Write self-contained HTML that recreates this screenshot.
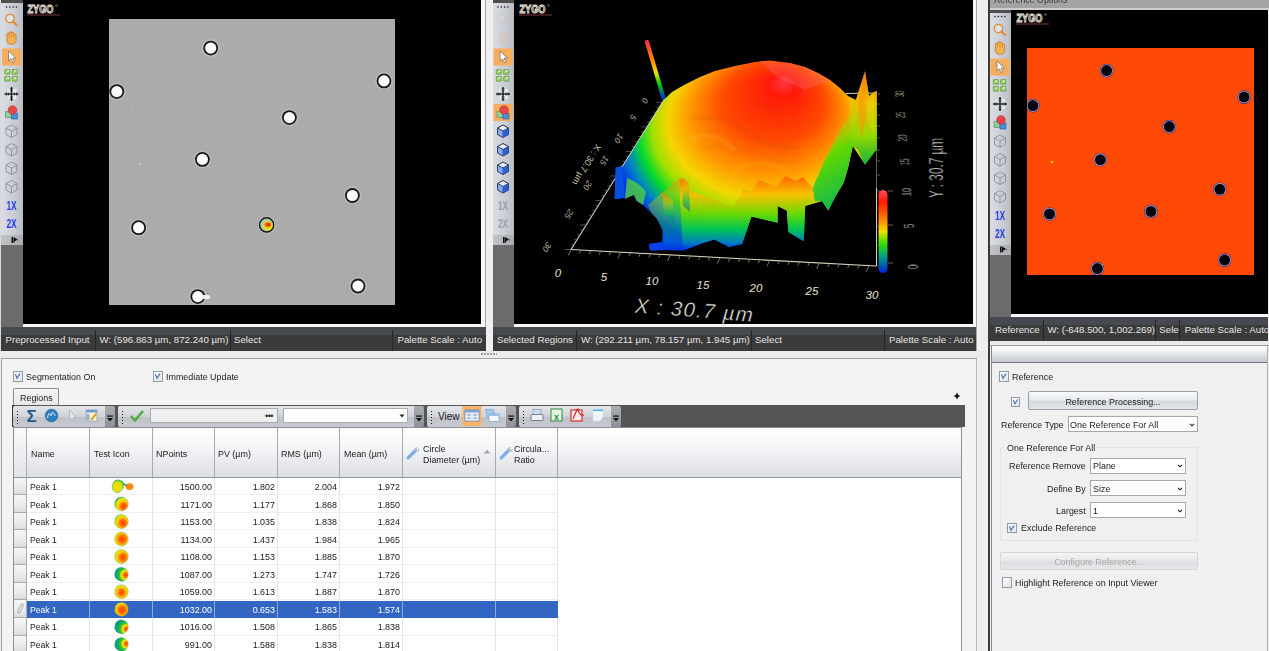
<!DOCTYPE html><html><head><meta charset="utf-8"><style>
html,body{margin:0;padding:0;width:1269px;height:651px;overflow:hidden;background:#efefef;font-family:'Liberation Sans', sans-serif}
div{box-sizing:border-box}
</style></head><body><div style="position:relative;width:1269px;height:651px;overflow:hidden">
<div style="position:absolute;left:0;top:0;width:1px;height:351px;background:#d8d8d8"></div>
<div style="position:absolute;left:22px;top:0;width:459px;height:324px;background:#000"></div>
<div style="position:absolute;left:481px;top:0;width:4px;height:327px;background:#f7f7f7"></div>
<div style="position:absolute;left:22px;top:324px;width:463px;height:3px;background:#f7f7f7"></div>
<div style="position:absolute;left:485px;top:0;width:1px;height:351px;background:#a6a6a6"></div>
<div style="position:absolute;left:1px;top:0px;width:21.5px;height:327px;background:#6b6b6b"></div><div style="position:absolute;left:1px;top:0px;width:21.5px;height:3px;background:#4e4e4e"></div><div style="position:absolute;left:1px;top:3px;width:21.5px;height:232px;background:linear-gradient(90deg,#dadde3,#c9ccd3 60%,#b9bcc3)"></div><div style="position:absolute;left:1px;top:235px;width:21.5px;height:10px;background:linear-gradient(90deg,#c2c4c8,#a9abb0)"></div><svg style="position:absolute;left:0;top:0" width="1269" height="651" viewBox="0 0 1269 651" overflow="visible"><circle cx="6.5" cy="7" r="0.75" fill="#111"/><circle cx="9.8" cy="7" r="0.75" fill="#111"/><circle cx="13.1" cy="7" r="0.75" fill="#111"/><circle cx="16.4" cy="7" r="0.75" fill="#111"/><g opacity="1"><circle cx="10.0" cy="18.5" r="4.2" fill="#dfe3ea" stroke="#e08a2a" stroke-width="1.3"/>
<line x1="13.0" y1="21.5" x2="16.5" y2="25.0" stroke="#e8893a" stroke-width="2.4" stroke-linecap="round"/></g><g opacity="1" transform="translate(11.5 38.5)"><path d="M-4.6 -1 L-4.6 -4.2 Q-4.6 -5.4 -3.5 -5.4 Q-2.4 -5.4 -2.4 -4.2 L-2.4 -5.6 Q-2.4 -6.8 -1.2 -6.8 Q0 -6.8 0 -5.6 L0 -5.2 Q0 -6.4 1.2 -6.4 Q2.4 -6.4 2.4 -5.2 L2.4 -3.6 Q2.4 -4.6 3.5 -4.6 Q4.6 -4.6 4.6 -3.4 L4.6 1.5 Q4.6 5.5 0.5 5.8 L-1 5.8 Q-4.6 5.5 -4.6 2z" fill="#f2b452" stroke="#c7772a" stroke-width="0.8"/><path d="M-2.4 -4 v3 M0 -5 v3.5 M2.4 -3.5 v3" stroke="#c7772a" stroke-width="0.5"/></g><rect x="2" y="48.5" width="19.0" height="17" fill="#f6ae5e"/><path d="M8.5 51.0 l0 10 l2.4 -2.2 l2 4 l1.6 -0.8 l-2 -3.8 l3.4 0 z" fill="#fff" stroke="#777" stroke-width="0.8"/><rect x="4.699999999999999" y="69.5" width="5.2" height="4.8" rx="0.6" fill="#8fc85a" stroke="#4f8a2e" stroke-width="0.5"/><path d="M5.9 72.7 L8.5 70.7 M8.5 70.7 l-1.4 0 M8.5 70.7 l0 1.4" stroke="#f4fff0" stroke-width="0.7" fill="none"/><rect x="4.699999999999999" y="76.5" width="5.2" height="4.8" rx="0.6" fill="#8fc85a" stroke="#4f8a2e" stroke-width="0.5"/><path d="M5.9 79.7 L8.5 77.7 M8.5 77.7 l-1.4 0 M8.5 77.7 l0 1.4" stroke="#f4fff0" stroke-width="0.7" fill="none"/><rect x="12.1" y="69.5" width="5.2" height="4.8" rx="0.6" fill="#8fc85a" stroke="#4f8a2e" stroke-width="0.5"/><path d="M13.299999999999999 72.7 L15.899999999999999 70.7 M15.899999999999999 70.7 l-1.4 0 M15.899999999999999 70.7 l0 1.4" stroke="#f4fff0" stroke-width="0.7" fill="none"/><rect x="12.1" y="76.5" width="5.2" height="4.8" rx="0.6" fill="#8fc85a" stroke="#4f8a2e" stroke-width="0.5"/><path d="M13.299999999999999 79.7 L15.899999999999999 77.7 M15.899999999999999 77.7 l-1.4 0 M15.899999999999999 77.7 l0 1.4" stroke="#f4fff0" stroke-width="0.7" fill="none"/><rect x="7.5" y="89.0" width="9" height="10" fill="#e6e8ec"/><line x1="4.5" y1="94.0" x2="18.5" y2="94.0" stroke="#111" stroke-width="1.3"/>
<line x1="11.5" y1="87.0" x2="11.5" y2="101.0" stroke="#111" stroke-width="1.3"/>
<path d="M6.5 92.5v3M8.5 92.5v3M14.5 92.5v3M16.5 92.5v3M10.0 89.0h3M10.0 91.0h3M10.0 97.0h3M10.0 99.0h3" stroke="#222" stroke-width="0.8"/><rect x="5.5" y="111.5" width="6" height="6" fill="#8fcf9a" stroke="#4a8a6a" stroke-width="0.6"/>
<rect x="11.5" y="113.0" width="6" height="6" fill="#4a8fd8" stroke="#2a5a9a" stroke-width="0.6"/>
<circle cx="12.5" cy="110.0" r="4.3" fill="#e8454a" stroke="#b02a30" stroke-width="0.6"/><path d="M11.5 125.0 l5.5 3 v6.5 l-5.5 3 l-5.5 -3 v-6.5z" fill="none" stroke="#8a8e96" stroke-width="0.9"/>
<path d="M6.0 128.0 l5.5 3 l5.5 -3 M11.5 131.0 v6.5" stroke="#8a8e96" stroke-width="0.9" fill="none"/><path d="M11.5 143.5 l5.5 3 v6.5 l-5.5 3 l-5.5 -3 v-6.5z" fill="none" stroke="#8a8e96" stroke-width="0.9"/>
<path d="M6.0 146.5 l5.5 3 l5.5 -3 M11.5 149.5 v6.5" stroke="#8a8e96" stroke-width="0.9" fill="none"/><path d="M11.5 162.0 l5.5 3 v6.5 l-5.5 3 l-5.5 -3 v-6.5z" fill="none" stroke="#8a8e96" stroke-width="0.9"/>
<path d="M6.0 165.0 l5.5 3 l5.5 -3 M11.5 168.0 v6.5" stroke="#8a8e96" stroke-width="0.9" fill="none"/><path d="M11.5 180.5 l5.5 3 v6.5 l-5.5 3 l-5.5 -3 v-6.5z" fill="none" stroke="#8a8e96" stroke-width="0.9"/>
<path d="M6.0 183.5 l5.5 3 l5.5 -3 M11.5 186.5 v6.5" stroke="#8a8e96" stroke-width="0.9" fill="none"/><text x="6.5" y="209.5" font-family="Liberation Sans" font-weight="bold" font-size="12" fill="#1f3ee6" textLength="10" lengthAdjust="spacingAndGlyphs">1X</text><text x="6.5" y="228.0" font-family="Liberation Sans" font-weight="bold" font-size="12" fill="#1f3ee6" textLength="10" lengthAdjust="spacingAndGlyphs">2X</text><rect x="11.5" y="237.0" width="1.6" height="6" fill="#111"/><path d="M13.5 237.0 l5 3 l-5 3z" fill="#111"/><path d="M14.5 242.0 l3 -2" stroke="#fff" stroke-width="0.8"/></svg>
<svg style="position:absolute;left:0;top:0" width="1269" height="651" viewBox="0 0 1269 651"><rect x="109" y="19" width="286" height="286" fill="#ababab"/><defs><clipPath id="lclip"><rect x="109" y="19" width="286" height="286"/></clipPath></defs><g clip-path="url(#lclip)"><circle cx="210.7" cy="48.1" r="9" fill="#c4c4c4" opacity="0.6"/><circle cx="210.7" cy="48.1" r="7.4" fill="#1a1a1a"/><circle cx="210.7" cy="48.1" r="5.6" fill="#fdfdfd"/><circle cx="116.8" cy="91.6" r="9" fill="#c4c4c4" opacity="0.6"/><circle cx="116.8" cy="91.6" r="7.4" fill="#1a1a1a"/><circle cx="116.8" cy="91.6" r="5.6" fill="#fdfdfd"/><circle cx="384" cy="80.9" r="9" fill="#c4c4c4" opacity="0.6"/><circle cx="384" cy="80.9" r="7.4" fill="#1a1a1a"/><circle cx="384" cy="80.9" r="5.6" fill="#fdfdfd"/><circle cx="289.4" cy="117.6" r="9" fill="#c4c4c4" opacity="0.6"/><circle cx="289.4" cy="117.6" r="7.4" fill="#1a1a1a"/><circle cx="289.4" cy="117.6" r="5.6" fill="#fdfdfd"/><circle cx="202.4" cy="159.4" r="9" fill="#c4c4c4" opacity="0.6"/><circle cx="202.4" cy="159.4" r="7.4" fill="#1a1a1a"/><circle cx="202.4" cy="159.4" r="5.6" fill="#fdfdfd"/><circle cx="352.4" cy="195.5" r="9" fill="#c4c4c4" opacity="0.6"/><circle cx="352.4" cy="195.5" r="7.4" fill="#1a1a1a"/><circle cx="352.4" cy="195.5" r="5.6" fill="#fdfdfd"/><circle cx="138.6" cy="227.7" r="9" fill="#c4c4c4" opacity="0.6"/><circle cx="138.6" cy="227.7" r="7.4" fill="#1a1a1a"/><circle cx="138.6" cy="227.7" r="5.6" fill="#fdfdfd"/><circle cx="358" cy="286" r="9" fill="#c4c4c4" opacity="0.6"/><circle cx="358" cy="286" r="7.4" fill="#1a1a1a"/><circle cx="358" cy="286" r="5.6" fill="#fdfdfd"/><circle cx="197.8" cy="296.6" r="9" fill="#c4c4c4" opacity="0.6"/><circle cx="197.8" cy="296.6" r="7.4" fill="#1a1a1a"/><circle cx="197.8" cy="296.6" r="5.6" fill="#fdfdfd"/><ellipse cx="206" cy="297" rx="4" ry="2.2" fill="#f4f4f4"/><circle cx="266.6" cy="224.9" r="9" fill="#c4c4c4" opacity="0.6"/><circle cx="266.6" cy="224.9" r="7.8" fill="#1a1a1a"/><circle cx="266.6" cy="224.9" r="6.3" fill="#a8d0b8"/><ellipse cx="267.8" cy="225.70000000000002" rx="4.8" ry="5" fill="#e0e020"/><ellipse cx="267.8" cy="224.6" rx="3.4" ry="2.6" fill="#f86a10"/><ellipse cx="268.6" cy="224.4" rx="1.8" ry="1.5" fill="#e83010"/><circle cx="140" cy="164" r="0.8" fill="#eee"/><circle cx="131" cy="110" r="0.6" fill="#ddd"/></g></svg>
<div style="position:absolute;left:27px;top:3px;width:36px;height:14px;">
<svg width="36" height="14" viewBox="0 0 36 14"><text x="0.5" y="10" font-family="Liberation Sans" font-weight="bold" font-size="10.5" fill="#000" stroke="#eee6dc" stroke-width="0.9" textLength="26" lengthAdjust="spacingAndGlyphs">ZYGO</text>
<circle cx="29.5" cy="2.5" r="0.9" fill="none" stroke="#bbb" stroke-width="0.5"/><line x1="0" y1="12" x2="33" y2="12" stroke="#7a3448" stroke-width="1"/></svg></div>
<div style="position:absolute;left:1px;top:327px;width:484.5px;height:23.5px;background:#3b3b3b;overflow:hidden"><div style="position:absolute;left:0;top:0;right:0;height:7.5px;background:#464950"></div><div style="position:absolute;left:4.5px;top:6px;font-family:'Liberation Sans', sans-serif;font-size:9.7px;letter-spacing:0px;color:#e4e4e4;white-space:nowrap;line-height:13px">Preprocessed Input</div><div style="position:absolute;left:93.5px;top:3px;width:1px;height:20.5px;background:#262626"></div><div style="position:absolute;left:98.5px;top:6px;font-family:'Liberation Sans', sans-serif;font-size:9.7px;letter-spacing:0px;color:#e4e4e4;white-space:nowrap;line-height:13px">W: (596.863 µm, 872.240 µm)</div><div style="position:absolute;left:228.5px;top:3px;width:1px;height:20.5px;background:#262626"></div><div style="position:absolute;left:233px;top:6px;font-family:'Liberation Sans', sans-serif;font-size:9.7px;letter-spacing:0px;color:#e4e4e4;white-space:nowrap;line-height:13px">Select</div><div style="position:absolute;left:396.5px;top:6px;font-family:'Liberation Sans', sans-serif;font-size:9.7px;letter-spacing:0px;color:#e4e4e4;white-space:nowrap;line-height:13px">Palette Scale : Auto</div><div style="position:absolute;left:390.5px;top:3px;width:1px;height:20.5px;background:#262626"></div></div>
<div style="position:absolute;left:514px;top:0;width:459px;height:324px;background:#000"></div>
<div style="position:absolute;left:973px;top:0;width:3px;height:327px;background:#f7f7f7"></div>
<div style="position:absolute;left:514px;top:324px;width:462px;height:3px;background:#f7f7f7"></div>
<div style="position:absolute;left:976px;top:0;width:1px;height:351px;background:#a6a6a6"></div>
<div style="position:absolute;left:492.5px;top:0px;width:21.5px;height:327px;background:#6b6b6b"></div><div style="position:absolute;left:492.5px;top:0px;width:21.5px;height:3px;background:#4e4e4e"></div><div style="position:absolute;left:492.5px;top:3px;width:21.5px;height:232px;background:linear-gradient(90deg,#dadde3,#c9ccd3 60%,#b9bcc3)"></div><div style="position:absolute;left:492.5px;top:235px;width:21.5px;height:10px;background:linear-gradient(90deg,#c2c4c8,#a9abb0)"></div><svg style="position:absolute;left:0;top:0" width="1269" height="651" viewBox="0 0 1269 651" overflow="visible"><circle cx="498.0" cy="7" r="0.75" fill="#111"/><circle cx="501.3" cy="7" r="0.75" fill="#111"/><circle cx="504.6" cy="7" r="0.75" fill="#111"/><circle cx="507.9" cy="7" r="0.75" fill="#111"/><g opacity="0.13"><circle cx="501.5" cy="18.5" r="4.2" fill="#dfe3ea" stroke="#e08a2a" stroke-width="1.3"/>
<line x1="504.5" y1="21.5" x2="508.0" y2="25.0" stroke="#e8893a" stroke-width="2.4" stroke-linecap="round"/></g><g opacity="0.12" transform="translate(503.0 38.5)"><path d="M-4.6 -1 L-4.6 -4.2 Q-4.6 -5.4 -3.5 -5.4 Q-2.4 -5.4 -2.4 -4.2 L-2.4 -5.6 Q-2.4 -6.8 -1.2 -6.8 Q0 -6.8 0 -5.6 L0 -5.2 Q0 -6.4 1.2 -6.4 Q2.4 -6.4 2.4 -5.2 L2.4 -3.6 Q2.4 -4.6 3.5 -4.6 Q4.6 -4.6 4.6 -3.4 L4.6 1.5 Q4.6 5.5 0.5 5.8 L-1 5.8 Q-4.6 5.5 -4.6 2z" fill="#f2b452" stroke="#c7772a" stroke-width="0.8"/><path d="M-2.4 -4 v3 M0 -5 v3.5 M2.4 -3.5 v3" stroke="#c7772a" stroke-width="0.5"/></g><rect x="493.5" y="48.5" width="19.0" height="17" fill="#f6ae5e"/><path d="M500.0 51.0 l0 10 l2.4 -2.2 l2 4 l1.6 -0.8 l-2 -3.8 l3.4 0 z" fill="#fff" stroke="#777" stroke-width="0.8"/><rect x="496.2" y="69.5" width="5.2" height="4.8" rx="0.6" fill="#8fc85a" stroke="#4f8a2e" stroke-width="0.5"/><path d="M497.40000000000003 72.7 L500.0 70.7 M500.0 70.7 l-1.4 0 M500.0 70.7 l0 1.4" stroke="#f4fff0" stroke-width="0.7" fill="none"/><rect x="496.2" y="76.5" width="5.2" height="4.8" rx="0.6" fill="#8fc85a" stroke="#4f8a2e" stroke-width="0.5"/><path d="M497.40000000000003 79.7 L500.0 77.7 M500.0 77.7 l-1.4 0 M500.0 77.7 l0 1.4" stroke="#f4fff0" stroke-width="0.7" fill="none"/><rect x="503.59999999999997" y="69.5" width="5.2" height="4.8" rx="0.6" fill="#8fc85a" stroke="#4f8a2e" stroke-width="0.5"/><path d="M504.8 72.7 L507.4 70.7 M507.4 70.7 l-1.4 0 M507.4 70.7 l0 1.4" stroke="#f4fff0" stroke-width="0.7" fill="none"/><rect x="503.59999999999997" y="76.5" width="5.2" height="4.8" rx="0.6" fill="#8fc85a" stroke="#4f8a2e" stroke-width="0.5"/><path d="M504.8 79.7 L507.4 77.7 M507.4 77.7 l-1.4 0 M507.4 77.7 l0 1.4" stroke="#f4fff0" stroke-width="0.7" fill="none"/><rect x="499.0" y="89.0" width="9" height="10" fill="#e6e8ec"/><line x1="496.0" y1="94.0" x2="510.0" y2="94.0" stroke="#111" stroke-width="1.3"/>
<line x1="503.0" y1="87.0" x2="503.0" y2="101.0" stroke="#111" stroke-width="1.3"/>
<path d="M498.0 92.5v3M500.0 92.5v3M506.0 92.5v3M508.0 92.5v3M501.5 89.0h3M501.5 91.0h3M501.5 97.0h3M501.5 99.0h3" stroke="#222" stroke-width="0.8"/><rect x="493.5" y="104.0" width="19.0" height="17" fill="#f6ae5e"/><rect x="497.0" y="111.5" width="6" height="6" fill="#8fcf9a" stroke="#4a8a6a" stroke-width="0.6"/>
<rect x="503.0" y="113.0" width="6" height="6" fill="#4a8fd8" stroke="#2a5a9a" stroke-width="0.6"/>
<circle cx="504.0" cy="110.0" r="4.3" fill="#e8454a" stroke="#b02a30" stroke-width="0.6"/><path d="M503.0 125.0 l5.5 3 v6.5 l-5.5 3 l-5.5 -3 v-6.5z" fill="#e8ecf4" stroke="#1e2a44" stroke-width="1"/>
<path d="M497.5 128.0 l5.5 3 l5.5 -3 M503.0 131.0 v6.5" stroke="#1e2a44" stroke-width="1" fill="none"/>
<path d="M503.0 131.0 l5.5 -3 v6.5 l-5.5 3z" fill="#2c5fd0"/><path d="M497.5 128.0 l5.5 3 v6.5 l-5.5 -3z" fill="#4a7ee0" opacity="0.6"/><path d="M503.0 143.5 l5.5 3 v6.5 l-5.5 3 l-5.5 -3 v-6.5z" fill="#e8ecf4" stroke="#1e2a44" stroke-width="1"/>
<path d="M497.5 146.5 l5.5 3 l5.5 -3 M503.0 149.5 v6.5" stroke="#1e2a44" stroke-width="1" fill="none"/>
<path d="M503.0 149.5 l5.5 -3 v6.5 l-5.5 3z" fill="#2c5fd0"/><path d="M497.5 146.5 l5.5 3 v6.5 l-5.5 -3z" fill="#4a7ee0" opacity="0.6"/><path d="M503.0 162.0 l5.5 3 v6.5 l-5.5 3 l-5.5 -3 v-6.5z" fill="#e8ecf4" stroke="#1e2a44" stroke-width="1"/>
<path d="M497.5 165.0 l5.5 3 l5.5 -3 M503.0 168.0 v6.5" stroke="#1e2a44" stroke-width="1" fill="none"/>
<path d="M503.0 168.0 l5.5 -3 v6.5 l-5.5 3z" fill="#2c5fd0"/><path d="M497.5 165.0 l5.5 3 v6.5 l-5.5 -3z" fill="#4a7ee0" opacity="0.6"/><path d="M503.0 180.5 l5.5 3 v6.5 l-5.5 3 l-5.5 -3 v-6.5z" fill="#e8ecf4" stroke="#1e2a44" stroke-width="1"/>
<path d="M497.5 183.5 l5.5 3 l5.5 -3 M503.0 186.5 v6.5" stroke="#1e2a44" stroke-width="1" fill="none"/>
<path d="M503.0 186.5 l5.5 -3 v6.5 l-5.5 3z" fill="#2c5fd0"/><path d="M497.5 183.5 l5.5 3 v6.5 l-5.5 -3z" fill="#4a7ee0" opacity="0.6"/><text x="498.0" y="209.5" font-family="Liberation Sans" font-weight="bold" font-size="12" fill="#9aa0aa" textLength="10" lengthAdjust="spacingAndGlyphs">1X</text><text x="498.0" y="228.0" font-family="Liberation Sans" font-weight="bold" font-size="12" fill="#9aa0aa" textLength="10" lengthAdjust="spacingAndGlyphs">2X</text><rect x="503.0" y="237.0" width="1.6" height="6" fill="#111"/><path d="M505.0 237.0 l5 3 l-5 3z" fill="#111"/><path d="M506.0 242.0 l3 -2" stroke="#fff" stroke-width="0.8"/></svg>
<svg style="position:absolute;left:514px;top:0" width="459" height="324" viewBox="514 0 459 324"><defs>
<radialGradient id="dome" gradientUnits="userSpaceOnUse" cx="755" cy="140" r="140" fx="785" fy="63.7" gradientTransform="translate(755 140) scale(1 0.786) translate(-755 -140)">
<stop offset="0" stop-color="#ff3a48"/><stop offset="0.1" stop-color="#ff1a08"/><stop offset="0.36" stop-color="#ff4a00"/>
<stop offset="0.56" stop-color="#ff9800"/><stop offset="0.69" stop-color="#f4d600"/><stop offset="0.78" stop-color="#a0e000"/>
<stop offset="0.86" stop-color="#00d830"/><stop offset="0.93" stop-color="#0088c0"/><stop offset="1" stop-color="#0038e8"/></radialGradient>
<linearGradient id="skirt" gradientUnits="userSpaceOnUse" x1="0" y1="176" x2="0" y2="250">
<stop offset="0" stop-color="#ff6000"/><stop offset="0.25" stop-color="#f8c000"/><stop offset="0.5" stop-color="#70d800"/>
<stop offset="0.72" stop-color="#00c850"/><stop offset="0.9" stop-color="#0080c0"/><stop offset="1" stop-color="#0030e8"/></linearGradient>
<linearGradient id="rgreen" gradientUnits="userSpaceOnUse" x1="800" y1="130" x2="850" y2="210"><stop offset="0" stop-color="#c0e000" stop-opacity="0"/><stop offset="0.4" stop-color="#60d800"/><stop offset="1" stop-color="#00b060"/></linearGradient>
<linearGradient id="rspike" gradientUnits="userSpaceOnUse" x1="0" y1="70" x2="0" y2="165"><stop offset="0" stop-color="#ff7000"/><stop offset="0.35" stop-color="#f0c000"/><stop offset="0.7" stop-color="#90d800"/><stop offset="1" stop-color="#10b040"/></linearGradient>
<linearGradient id="blade" x1="0" y1="0" x2="0" y2="1"><stop offset="0" stop-color="#ff6a00"/><stop offset="0.35" stop-color="#d8c000"/><stop offset="0.7" stop-color="#20c050"/><stop offset="1" stop-color="#0050d0" stop-opacity="0.6"/></linearGradient>
<linearGradient id="zbar" x1="0" y1="0" x2="0" y2="1">
<stop offset="0" stop-color="#ff4a5a"/><stop offset="0.15" stop-color="#ff1a00"/><stop offset="0.35" stop-color="#ff8000"/>
<stop offset="0.5" stop-color="#f0e000"/><stop offset="0.65" stop-color="#30e000"/><stop offset="0.8" stop-color="#00a080"/><stop offset="1" stop-color="#0020e0"/></linearGradient>
<linearGradient id="zbar2" x1="0" y1="0" x2="0" y2="1">
<stop offset="0" stop-color="#ff3040"/><stop offset="0.35" stop-color="#ff9000"/><stop offset="0.55" stop-color="#f0e000"/>
<stop offset="0.75" stop-color="#00d000"/><stop offset="1" stop-color="#0030e0"/></linearGradient>
<filter id="blur1" x="-20%" y="-20%" width="140%" height="140%"><feGaussianBlur stdDeviation="1.6"/></filter></defs><line x1="571" y1="249.5" x2="876" y2="266" stroke="#ddd5c0" stroke-width="1.1"/><line x1="571" y1="249.5" x2="664.6" y2="99" stroke="#ddd5c0" stroke-width="1.1"/><line x1="876.5" y1="91" x2="876.5" y2="188" stroke="#6a6050" stroke-width="1"/><line x1="876.5" y1="188" x2="876.5" y2="266" stroke="#ddd5c0" stroke-width="1"/><line x1="846" y1="93.5" x2="877" y2="93" stroke="#ddd5c0" stroke-width="1"/><line x1="571.0" y1="249.5" x2="568.3" y2="255.5" stroke="#9a9080" stroke-width="0.8"/><line x1="580.9" y1="250.0" x2="579.3" y2="253.5" stroke="#9a9080" stroke-width="0.8"/><line x1="590.9" y1="250.6" x2="589.3" y2="254.1" stroke="#9a9080" stroke-width="0.8"/><line x1="600.8" y1="251.1" x2="599.2" y2="254.6" stroke="#9a9080" stroke-width="0.8"/><line x1="610.7" y1="251.6" x2="609.1" y2="255.1" stroke="#9a9080" stroke-width="0.8"/><line x1="620.7" y1="252.2" x2="617.9" y2="258.2" stroke="#9a9080" stroke-width="0.8"/><line x1="630.6" y1="252.7" x2="629.0" y2="256.2" stroke="#9a9080" stroke-width="0.8"/><line x1="640.5" y1="253.3" x2="638.9" y2="256.8" stroke="#9a9080" stroke-width="0.8"/><line x1="650.5" y1="253.8" x2="648.9" y2="257.3" stroke="#9a9080" stroke-width="0.8"/><line x1="660.4" y1="254.3" x2="658.8" y2="257.8" stroke="#9a9080" stroke-width="0.8"/><line x1="670.3" y1="254.9" x2="667.6" y2="260.9" stroke="#9a9080" stroke-width="0.8"/><line x1="680.3" y1="255.4" x2="678.7" y2="258.9" stroke="#9a9080" stroke-width="0.8"/><line x1="690.2" y1="255.9" x2="688.6" y2="259.4" stroke="#9a9080" stroke-width="0.8"/><line x1="700.2" y1="256.5" x2="698.6" y2="260.0" stroke="#9a9080" stroke-width="0.8"/><line x1="710.1" y1="257.0" x2="708.5" y2="260.5" stroke="#9a9080" stroke-width="0.8"/><line x1="720.0" y1="257.6" x2="717.3" y2="263.6" stroke="#9a9080" stroke-width="0.8"/><line x1="730.0" y1="258.1" x2="728.4" y2="261.6" stroke="#9a9080" stroke-width="0.8"/><line x1="739.9" y1="258.6" x2="738.3" y2="262.1" stroke="#9a9080" stroke-width="0.8"/><line x1="749.8" y1="259.2" x2="748.2" y2="262.7" stroke="#9a9080" stroke-width="0.8"/><line x1="759.8" y1="259.7" x2="758.2" y2="263.2" stroke="#9a9080" stroke-width="0.8"/><line x1="769.7" y1="260.2" x2="767.0" y2="266.2" stroke="#9a9080" stroke-width="0.8"/><line x1="779.6" y1="260.8" x2="778.0" y2="264.3" stroke="#9a9080" stroke-width="0.8"/><line x1="789.6" y1="261.3" x2="788.0" y2="264.8" stroke="#9a9080" stroke-width="0.8"/><line x1="799.5" y1="261.9" x2="797.9" y2="265.4" stroke="#9a9080" stroke-width="0.8"/><line x1="809.4" y1="262.4" x2="807.8" y2="265.9" stroke="#9a9080" stroke-width="0.8"/><line x1="819.4" y1="262.9" x2="816.6" y2="268.9" stroke="#9a9080" stroke-width="0.8"/><line x1="829.3" y1="263.5" x2="827.7" y2="267.0" stroke="#9a9080" stroke-width="0.8"/><line x1="839.2" y1="264.0" x2="837.6" y2="267.5" stroke="#9a9080" stroke-width="0.8"/><line x1="849.2" y1="264.5" x2="847.6" y2="268.0" stroke="#9a9080" stroke-width="0.8"/><line x1="859.1" y1="265.1" x2="857.5" y2="268.6" stroke="#9a9080" stroke-width="0.8"/><line x1="869.0" y1="265.6" x2="866.3" y2="271.6" stroke="#9a9080" stroke-width="0.8"/><line x1="571.0" y1="249.5" x2="565.0" y2="249.5" stroke="#6a6458" stroke-width="0.8"/><line x1="574.0" y1="244.6" x2="571.0" y2="244.6" stroke="#6a6458" stroke-width="0.8"/><line x1="577.1" y1="239.7" x2="574.1" y2="239.7" stroke="#6a6458" stroke-width="0.8"/><line x1="580.1" y1="234.8" x2="577.1" y2="234.8" stroke="#6a6458" stroke-width="0.8"/><line x1="583.2" y1="229.9" x2="580.2" y2="229.9" stroke="#6a6458" stroke-width="0.8"/><line x1="586.2" y1="225.0" x2="580.2" y2="225.0" stroke="#6a6458" stroke-width="0.8"/><line x1="589.3" y1="220.1" x2="586.3" y2="220.1" stroke="#6a6458" stroke-width="0.8"/><line x1="592.3" y1="215.2" x2="589.3" y2="215.2" stroke="#6a6458" stroke-width="0.8"/><line x1="595.4" y1="210.3" x2="592.4" y2="210.3" stroke="#6a6458" stroke-width="0.8"/><line x1="598.4" y1="205.4" x2="595.4" y2="205.4" stroke="#6a6458" stroke-width="0.8"/><line x1="601.5" y1="200.5" x2="595.5" y2="200.5" stroke="#6a6458" stroke-width="0.8"/><line x1="604.5" y1="195.6" x2="601.5" y2="195.6" stroke="#6a6458" stroke-width="0.8"/><line x1="607.6" y1="190.7" x2="604.6" y2="190.7" stroke="#6a6458" stroke-width="0.8"/><line x1="610.6" y1="185.8" x2="607.6" y2="185.8" stroke="#6a6458" stroke-width="0.8"/><line x1="613.7" y1="180.9" x2="610.7" y2="180.9" stroke="#6a6458" stroke-width="0.8"/><line x1="616.7" y1="176.0" x2="610.7" y2="176.0" stroke="#6a6458" stroke-width="0.8"/><line x1="619.8" y1="171.1" x2="616.8" y2="171.1" stroke="#6a6458" stroke-width="0.8"/><line x1="622.8" y1="166.2" x2="619.8" y2="166.2" stroke="#6a6458" stroke-width="0.8"/><line x1="625.9" y1="161.3" x2="622.9" y2="161.3" stroke="#6a6458" stroke-width="0.8"/><line x1="628.9" y1="156.4" x2="625.9" y2="156.4" stroke="#6a6458" stroke-width="0.8"/><line x1="632.0" y1="151.5" x2="626.0" y2="151.5" stroke="#6a6458" stroke-width="0.8"/><line x1="635.0" y1="146.6" x2="632.0" y2="146.6" stroke="#6a6458" stroke-width="0.8"/><line x1="638.1" y1="141.6" x2="635.1" y2="141.6" stroke="#6a6458" stroke-width="0.8"/><line x1="641.1" y1="136.7" x2="638.1" y2="136.7" stroke="#6a6458" stroke-width="0.8"/><line x1="644.2" y1="131.8" x2="641.2" y2="131.8" stroke="#6a6458" stroke-width="0.8"/><line x1="647.2" y1="126.9" x2="641.2" y2="126.9" stroke="#6a6458" stroke-width="0.8"/><line x1="650.3" y1="122.0" x2="647.3" y2="122.0" stroke="#6a6458" stroke-width="0.8"/><line x1="653.3" y1="117.1" x2="650.3" y2="117.1" stroke="#6a6458" stroke-width="0.8"/><line x1="656.4" y1="112.2" x2="653.4" y2="112.2" stroke="#6a6458" stroke-width="0.8"/><line x1="659.4" y1="107.3" x2="656.4" y2="107.3" stroke="#6a6458" stroke-width="0.8"/><line x1="662.5" y1="102.4" x2="656.5" y2="102.4" stroke="#6a6458" stroke-width="0.8"/><line x1="876.5" y1="94" x2="880" y2="94" stroke="#6a6458" stroke-width="0.8"/><line x1="876.5" y1="104" x2="880" y2="104" stroke="#6a6458" stroke-width="0.8"/><line x1="876.5" y1="115" x2="880" y2="115" stroke="#6a6458" stroke-width="0.8"/><line x1="876.5" y1="126" x2="880" y2="126" stroke="#6a6458" stroke-width="0.8"/><line x1="876.5" y1="138" x2="880" y2="138" stroke="#6a6458" stroke-width="0.8"/><line x1="876.5" y1="150" x2="880" y2="150" stroke="#6a6458" stroke-width="0.8"/><line x1="876.5" y1="161" x2="880" y2="161" stroke="#6a6458" stroke-width="0.8"/><line x1="876.5" y1="175" x2="880" y2="175" stroke="#6a6458" stroke-width="0.8"/><line x1="876.5" y1="191" x2="880" y2="191" stroke="#6a6458" stroke-width="0.8"/><line x1="876.5" y1="208" x2="880" y2="208" stroke="#6a6458" stroke-width="0.8"/><line x1="876.5" y1="226" x2="880" y2="226" stroke="#6a6458" stroke-width="0.8"/><line x1="876.5" y1="245" x2="880" y2="245" stroke="#6a6458" stroke-width="0.8"/><line x1="876.5" y1="266" x2="880" y2="266" stroke="#6a6458" stroke-width="0.8"/><text x="558" y="277" text-anchor="middle" font-family="Liberation Sans" font-style="italic" font-size="11.5" fill="#e8e2d2">0</text><text x="604" y="281" text-anchor="middle" font-family="Liberation Sans" font-style="italic" font-size="11.5" fill="#e8e2d2">5</text><text x="652" y="285" text-anchor="middle" font-family="Liberation Sans" font-style="italic" font-size="11.5" fill="#e8e2d2">10</text><text x="703" y="289" text-anchor="middle" font-family="Liberation Sans" font-style="italic" font-size="11.5" fill="#e8e2d2">15</text><text x="756" y="292" text-anchor="middle" font-family="Liberation Sans" font-style="italic" font-size="11.5" fill="#e8e2d2">20</text><text x="812" y="295" text-anchor="middle" font-family="Liberation Sans" font-style="italic" font-size="11.5" fill="#e8e2d2">25</text><text x="872" y="299" text-anchor="middle" font-family="Liberation Sans" font-style="italic" font-size="11.5" fill="#e8e2d2">30</text><text x="634.5" y="312.5" font-family="Liberation Sans" font-style="italic" font-size="20.5" letter-spacing="1.3" fill="#f6f2ea" stroke="#000" stroke-width="0.45" transform="rotate(4.5 634.5 312.5)">X : 30.7 µm</text><text x="547" y="250" text-anchor="middle" font-family="Liberation Sans" font-style="italic" font-size="8.5" fill="#b8b098" transform="rotate(122 547 247)">30</text><text x="569" y="217" text-anchor="middle" font-family="Liberation Sans" font-style="italic" font-size="8.5" fill="#b8b098" transform="rotate(122 569 214)">25</text><text x="587.5" y="188.4" text-anchor="middle" font-family="Liberation Sans" font-style="italic" font-size="8.5" fill="#b8b098" transform="rotate(122 587.5 185.4)">20</text><text x="604.5" y="163.5" text-anchor="middle" font-family="Liberation Sans" font-style="italic" font-size="8.5" fill="#b8b098" transform="rotate(122 604.5 160.5)">15</text><text x="618.8" y="141.3" text-anchor="middle" font-family="Liberation Sans" font-style="italic" font-size="8.5" fill="#b8b098" transform="rotate(122 618.8 138.3)">10</text><text x="633.2" y="120.4" text-anchor="middle" font-family="Liberation Sans" font-style="italic" font-size="8.5" fill="#b8b098" transform="rotate(122 633.2 117.4)">5</text><text x="645" y="103.5" text-anchor="middle" font-family="Liberation Sans" font-style="italic" font-size="8.5" fill="#b8b098" transform="rotate(122 645 100.5)">0</text><text x="584" y="163" text-anchor="middle" font-family="Liberation Sans" font-size="9" fill="#c8c0a8" transform="rotate(122 584 163)">X : 30.7 µm</text><text x="0" y="5.4" text-anchor="middle" font-family="Liberation Sans" font-size="15" fill="#ece6d6" stroke="#000" stroke-width="0.5" transform="translate(912.5 266.8) rotate(-90) scale(0.6 1)">0</text><text x="0" y="5.0" text-anchor="middle" font-family="Liberation Sans" font-size="14" fill="#ece6d6" stroke="#000" stroke-width="0.5" transform="translate(909 226) rotate(-90) scale(0.6 1)">5</text><text x="0" y="4.7" text-anchor="middle" font-family="Liberation Sans" font-size="13" fill="#ece6d6" stroke="#000" stroke-width="0.5" transform="translate(906 192) rotate(-90) scale(0.55 1)">10</text><text x="0" y="4.7" text-anchor="middle" font-family="Liberation Sans" font-size="13" fill="#ece6d6" stroke="#000" stroke-width="0.5" transform="translate(904 162) rotate(-90) scale(0.5 1)">15</text><text x="0" y="4.7" text-anchor="middle" font-family="Liberation Sans" font-size="13" fill="#ece6d6" stroke="#000" stroke-width="0.5" transform="translate(902.5 138) rotate(-90) scale(0.5 1)">20</text><text x="0" y="4.3" text-anchor="middle" font-family="Liberation Sans" font-size="12" fill="#ece6d6" stroke="#000" stroke-width="0.5" transform="translate(901 115) rotate(-90) scale(0.45 1)">25</text><text x="0" y="4.3" text-anchor="middle" font-family="Liberation Sans" font-size="12" fill="#ece6d6" stroke="#000" stroke-width="0.5" transform="translate(900 94) rotate(-90) scale(0.45 1)">30</text><text x="0" y="7.5" text-anchor="middle" font-family="Liberation Sans" font-size="21" fill="#f2eee4" stroke="#000" stroke-width="0.6" transform="translate(935.5 168) rotate(-90) scale(0.56 1)">Y : 30.7 µm</text><rect x="878.5" y="190" width="9" height="83" rx="4.5" fill="url(#zbar)"/><line x1="888" y1="191" x2="893" y2="191" stroke="#8a7a60" stroke-width="0.8"/><line x1="888" y1="225" x2="893" y2="225" stroke="#8a7a60" stroke-width="0.8"/><line x1="888" y1="263" x2="893" y2="263" stroke="#8a7a60" stroke-width="0.8"/><line x1="647" y1="42" x2="663.5" y2="98" stroke="url(#zbar2)" stroke-width="4.2" stroke-linecap="round"/><path d="M664.6 99 L672 92 L684 85 L700 77 L715 71 L735 66 L755 62 L770 60.5 L790 63 L805 67 L818 73 L830 80 L840 88 L848 96 L856 100 L865 71 L869 96 L874 92 L876.8 91 L876.8 149 L865 164.4 L852.8 146 L848 168 L843.6 182.8 L834.4 198.2 L828.3 210.5 L822 201 L805.2 205.9 L803.7 241.2 L788.4 232 L786.8 210.5 L777.6 205.9 L777.6 222.8 L751.5 216.6 L742 244 L729 247 L714.3 239.5 L703 243 L683 250.6 L664 250 L650 250.5 L649 244 L662 242 L662.6 230 L657 219 L651 212.5 L643 205 L636.7 201 L633.8 195 L624.2 198 L614.6 199 L615.7 167.6 L622.9 166 L629.8 155 L645.3 130 Z" fill="url(#dome)"/><path d="M812.7 187.7 L825 160 L840 130 L852 110 L852.8 146 L848 168 L843.6 182.8 L834.4 198.2 L828.3 210.5 L822 201 L814.6 201 Z" fill="url(#rgreen)"/><path d="M680 200 L680 178 L691.5 191.5 L712.7 199 L733.8 207 L743.5 189.6 L751 191.5 L758.8 180 L776 186.7 L785.8 176 L795.4 181 L803 177 L812.7 187.7 L814.6 201 L822 201 L805.2 205.9 L803.7 241.2 L788.4 232 L786.8 210.5 L777.6 205.9 L777.6 222.8 L751.5 216.6 L742 244 L729 247 L714.3 239.5 L703 243 L683 250.6 Z" fill="url(#skirt)" opacity="0.92"/><path d="M648 205 L665 190 L680 178 L691.5 191.5 L712.7 199 L714.3 239.5 L703 243 L683 250.6 L664 250 L662.6 230 L657 219 L651 212.5 Z" fill="url(#skirt)" opacity="0.4"/><g filter="url(#blur1)" opacity="0.2"><path d="M690 120 Q720 112 745 130 Q770 150 800 148" fill="none" stroke="#c04800" stroke-width="3"/><path d="M700 150 Q730 140 760 155 Q780 165 805 160" fill="none" stroke="#c86000" stroke-width="2.5"/><path d="M720 100 Q750 95 770 110 Q790 125 820 120" fill="none" stroke="#d04000" stroke-width="2"/><path d="M735 168 Q760 158 790 170" fill="none" stroke="#ffe000" stroke-width="3"/><path d="M690 140 Q715 128 735 150" fill="none" stroke="#ffe060" stroke-width="2.5"/></g><path d="M682 177 L689 183 L690 212 L683 206 Z" fill="url(#blade)" opacity="0.8"/><path d="M662 191 L673 200 L674 222 L664 214 Z" fill="url(#blade)" opacity="0.6"/><path d="M627 178 Q640 183 646 192 L643 205 L636.7 201 L633.8 195 L625 199 Z" fill="#50d040" opacity="0.8"/><path d="M850 100 L856 100 L865 71 L869 96 L874 92 L876.8 91 L876.8 149 L865 164.4 L858 150 L852.8 146 L850 120 Z" fill="url(#rspike)"/><path d="M858 104 L865 75 L866 120 L861 140 Z" fill="#ff9000" opacity="0.5"/><path d="M868 100 L874 94 L875 135 L868 125 Z" fill="#e0e000" opacity="0.4"/><path d="M615.7 167.6 L622.9 166 L624.2 198 L614.6 199 Z" fill="#0a50e0"/><path d="M650 250.5 L649 244 L662 242 L664 250 Z" fill="#0a40e8"/><path d="M760 61 L790 63 L805 67 L818 73 L830 80 L805 90 L775 76 Z" fill="#ff7080" opacity="0.3"/><line x1="622" y1="167" x2="664.6" y2="99" stroke="#ddd5c0" stroke-width="1" opacity="0.8"/></svg>
<div style="position:absolute;left:519px;top:3px;width:36px;height:14px;">
<svg width="36" height="14" viewBox="0 0 36 14"><text x="0.5" y="10" font-family="Liberation Sans" font-weight="bold" font-size="10.5" fill="#000" stroke="#eee6dc" stroke-width="0.9" textLength="26" lengthAdjust="spacingAndGlyphs">ZYGO</text>
<circle cx="29.5" cy="2.5" r="0.9" fill="none" stroke="#bbb" stroke-width="0.5"/><line x1="0" y1="12" x2="33" y2="12" stroke="#7a3448" stroke-width="1"/></svg></div>
<div style="position:absolute;left:492.5px;top:327px;width:483.5px;height:23.5px;background:#3b3b3b;overflow:hidden"><div style="position:absolute;left:0;top:0;right:0;height:7.5px;background:#464950"></div><div style="position:absolute;left:4.5px;top:6px;font-family:'Liberation Sans', sans-serif;font-size:9.7px;letter-spacing:0px;color:#e4e4e4;white-space:nowrap;line-height:13px">Selected Regions</div><div style="position:absolute;left:83.5px;top:3px;width:1px;height:20.5px;background:#262626"></div><div style="position:absolute;left:88.5px;top:6px;font-family:'Liberation Sans', sans-serif;font-size:9.7px;letter-spacing:0px;color:#e4e4e4;white-space:nowrap;line-height:13px">W: (292.211 µm, 78.157 µm, 1.945 µm)</div><div style="position:absolute;left:258.0px;top:3px;width:1px;height:20.5px;background:#262626"></div><div style="position:absolute;left:262.5px;top:6px;font-family:'Liberation Sans', sans-serif;font-size:9.7px;letter-spacing:0px;color:#e4e4e4;white-space:nowrap;line-height:13px">Select</div><div style="position:absolute;left:396.5px;top:6px;font-family:'Liberation Sans', sans-serif;font-size:9.7px;letter-spacing:0px;color:#e4e4e4;white-space:nowrap;line-height:13px">Palette Scale : Auto</div><div style="position:absolute;left:391.0px;top:3px;width:1px;height:20.5px;background:#262626"></div></div>
<div style="position:absolute;left:987.5px;top:0;width:2px;height:651px;background:#3a3a3a"></div>
<div style="position:absolute;left:989.5px;top:0;width:279px;height:8px;background:#a3a3a3;overflow:hidden"><div style="position:absolute;left:4.5px;top:-6.5px;font-family:Liberation Sans;font-size:10px;color:#3c3c3c;transform:scaleX(0.88);transform-origin:left;white-space:nowrap">Reference Options</div></div>
<div style="position:absolute;left:989.5px;top:8px;width:279px;height:1.5px;background:#cfcfcf"></div>
<div style="position:absolute;left:1011px;top:9.5px;width:257px;height:304.5px;background:#000"></div>
<div style="position:absolute;left:1011px;top:314px;width:257px;height:3px;background:#f7f7f7"></div>
<div style="position:absolute;left:989.5px;top:9.5px;width:21.5px;height:307.5px;background:#6b6b6b"></div><div style="position:absolute;left:989.5px;top:9.5px;width:21.5px;height:3px;background:#4e4e4e"></div><div style="position:absolute;left:989.5px;top:12.5px;width:21.5px;height:232.0px;background:linear-gradient(90deg,#dadde3,#c9ccd3 60%,#b9bcc3)"></div><div style="position:absolute;left:989.5px;top:244.5px;width:21.5px;height:10.0px;background:linear-gradient(90deg,#c2c4c8,#a9abb0)"></div><svg style="position:absolute;left:0;top:0" width="1269" height="651" viewBox="0 0 1269 651" overflow="visible"><circle cx="995.0" cy="16.5" r="0.75" fill="#111"/><circle cx="998.3" cy="16.5" r="0.75" fill="#111"/><circle cx="1001.6" cy="16.5" r="0.75" fill="#111"/><circle cx="1004.9" cy="16.5" r="0.75" fill="#111"/><g opacity="1"><circle cx="998.5" cy="28.5" r="4.2" fill="#dfe3ea" stroke="#e08a2a" stroke-width="1.3"/>
<line x1="1001.5" y1="31.5" x2="1005.0" y2="35.0" stroke="#e8893a" stroke-width="2.4" stroke-linecap="round"/></g><g opacity="1" transform="translate(1000.0 48.5)"><path d="M-4.6 -1 L-4.6 -4.2 Q-4.6 -5.4 -3.5 -5.4 Q-2.4 -5.4 -2.4 -4.2 L-2.4 -5.6 Q-2.4 -6.8 -1.2 -6.8 Q0 -6.8 0 -5.6 L0 -5.2 Q0 -6.4 1.2 -6.4 Q2.4 -6.4 2.4 -5.2 L2.4 -3.6 Q2.4 -4.6 3.5 -4.6 Q4.6 -4.6 4.6 -3.4 L4.6 1.5 Q4.6 5.5 0.5 5.8 L-1 5.8 Q-4.6 5.5 -4.6 2z" fill="#f2b452" stroke="#c7772a" stroke-width="0.8"/><path d="M-2.4 -4 v3 M0 -5 v3.5 M2.4 -3.5 v3" stroke="#c7772a" stroke-width="0.5"/></g><rect x="990.5" y="58.5" width="19.0" height="17" fill="#f6ae5e"/><path d="M997.0 61.0 l0 10 l2.4 -2.2 l2 4 l1.6 -0.8 l-2 -3.8 l3.4 0 z" fill="#fff" stroke="#777" stroke-width="0.8"/><rect x="993.1999999999999" y="79.5" width="5.2" height="4.8" rx="0.6" fill="#8fc85a" stroke="#4f8a2e" stroke-width="0.5"/><path d="M994.4 82.7 L997.0 80.7 M997.0 80.7 l-1.4 0 M997.0 80.7 l0 1.4" stroke="#f4fff0" stroke-width="0.7" fill="none"/><rect x="993.1999999999999" y="86.5" width="5.2" height="4.8" rx="0.6" fill="#8fc85a" stroke="#4f8a2e" stroke-width="0.5"/><path d="M994.4 89.7 L997.0 87.7 M997.0 87.7 l-1.4 0 M997.0 87.7 l0 1.4" stroke="#f4fff0" stroke-width="0.7" fill="none"/><rect x="1000.6" y="79.5" width="5.2" height="4.8" rx="0.6" fill="#8fc85a" stroke="#4f8a2e" stroke-width="0.5"/><path d="M1001.8000000000001 82.7 L1004.4000000000001 80.7 M1004.4000000000001 80.7 l-1.4 0 M1004.4000000000001 80.7 l0 1.4" stroke="#f4fff0" stroke-width="0.7" fill="none"/><rect x="1000.6" y="86.5" width="5.2" height="4.8" rx="0.6" fill="#8fc85a" stroke="#4f8a2e" stroke-width="0.5"/><path d="M1001.8000000000001 89.7 L1004.4000000000001 87.7 M1004.4000000000001 87.7 l-1.4 0 M1004.4000000000001 87.7 l0 1.4" stroke="#f4fff0" stroke-width="0.7" fill="none"/><rect x="996.0" y="99.0" width="9" height="10" fill="#e6e8ec"/><line x1="993.0" y1="104.0" x2="1007.0" y2="104.0" stroke="#111" stroke-width="1.3"/>
<line x1="1000.0" y1="97.0" x2="1000.0" y2="111.0" stroke="#111" stroke-width="1.3"/>
<path d="M995.0 102.5v3M997.0 102.5v3M1003.0 102.5v3M1005.0 102.5v3M998.5 99.0h3M998.5 101.0h3M998.5 107.0h3M998.5 109.0h3" stroke="#222" stroke-width="0.8"/><rect x="994.0" y="121.5" width="6" height="6" fill="#8fcf9a" stroke="#4a8a6a" stroke-width="0.6"/>
<rect x="1000.0" y="123.0" width="6" height="6" fill="#4a8fd8" stroke="#2a5a9a" stroke-width="0.6"/>
<circle cx="1001.0" cy="120.0" r="4.3" fill="#e8454a" stroke="#b02a30" stroke-width="0.6"/><path d="M1000.0 135.0 l5.5 3 v6.5 l-5.5 3 l-5.5 -3 v-6.5z" fill="none" stroke="#8a8e96" stroke-width="0.9"/>
<path d="M994.5 138.0 l5.5 3 l5.5 -3 M1000.0 141.0 v6.5" stroke="#8a8e96" stroke-width="0.9" fill="none"/><path d="M1000.0 153.5 l5.5 3 v6.5 l-5.5 3 l-5.5 -3 v-6.5z" fill="none" stroke="#8a8e96" stroke-width="0.9"/>
<path d="M994.5 156.5 l5.5 3 l5.5 -3 M1000.0 159.5 v6.5" stroke="#8a8e96" stroke-width="0.9" fill="none"/><path d="M1000.0 172.0 l5.5 3 v6.5 l-5.5 3 l-5.5 -3 v-6.5z" fill="none" stroke="#8a8e96" stroke-width="0.9"/>
<path d="M994.5 175.0 l5.5 3 l5.5 -3 M1000.0 178.0 v6.5" stroke="#8a8e96" stroke-width="0.9" fill="none"/><path d="M1000.0 190.5 l5.5 3 v6.5 l-5.5 3 l-5.5 -3 v-6.5z" fill="none" stroke="#8a8e96" stroke-width="0.9"/>
<path d="M994.5 193.5 l5.5 3 l5.5 -3 M1000.0 196.5 v6.5" stroke="#8a8e96" stroke-width="0.9" fill="none"/><text x="995.0" y="219.5" font-family="Liberation Sans" font-weight="bold" font-size="12" fill="#1f3ee6" textLength="10" lengthAdjust="spacingAndGlyphs">1X</text><text x="995.0" y="238.0" font-family="Liberation Sans" font-weight="bold" font-size="12" fill="#1f3ee6" textLength="10" lengthAdjust="spacingAndGlyphs">2X</text><rect x="1000.0" y="246.5" width="1.6" height="6" fill="#111"/><path d="M1002.0 246.5 l5 3 l-5 3z" fill="#111"/><path d="M1003.0 251.5 l3 -2" stroke="#fff" stroke-width="0.8"/></svg>
<svg style="position:absolute;left:0;top:0" width="1269" height="651" viewBox="0 0 1269 651"><rect x="1027" y="48" width="227" height="227" fill="#ff4a06"/><defs><clipPath id="rclip"><rect x="1027" y="48" width="227" height="227"/></clipPath></defs><g clip-path="url(#rclip)"><circle cx="1106.6" cy="70.6" r="6.8" fill="#3a2a8a"/><circle cx="1106.6" cy="70.6" r="6.2" fill="#e8e0e0" opacity="0.8"/><circle cx="1106.6" cy="70.6" r="5.5" fill="#050510"/><circle cx="1032.9" cy="105.6" r="6.8" fill="#3a2a8a"/><circle cx="1032.9" cy="105.6" r="6.2" fill="#e8e0e0" opacity="0.8"/><circle cx="1032.9" cy="105.6" r="5.5" fill="#050510"/><circle cx="1244.1" cy="97.1" r="6.8" fill="#3a2a8a"/><circle cx="1244.1" cy="97.1" r="6.2" fill="#e8e0e0" opacity="0.8"/><circle cx="1244.1" cy="97.1" r="5.5" fill="#050510"/><circle cx="1169.3" cy="126.6" r="6.8" fill="#3a2a8a"/><circle cx="1169.3" cy="126.6" r="6.2" fill="#e8e0e0" opacity="0.8"/><circle cx="1169.3" cy="126.6" r="5.5" fill="#050510"/><circle cx="1100.4" cy="159.8" r="6.8" fill="#3a2a8a"/><circle cx="1100.4" cy="159.8" r="6.2" fill="#e8e0e0" opacity="0.8"/><circle cx="1100.4" cy="159.8" r="5.5" fill="#050510"/><circle cx="1219.8" cy="189.3" r="6.8" fill="#3a2a8a"/><circle cx="1219.8" cy="189.3" r="6.2" fill="#e8e0e0" opacity="0.8"/><circle cx="1219.8" cy="189.3" r="5.5" fill="#050510"/><circle cx="1049.5" cy="214" r="6.8" fill="#3a2a8a"/><circle cx="1049.5" cy="214" r="6.2" fill="#e8e0e0" opacity="0.8"/><circle cx="1049.5" cy="214" r="5.5" fill="#050510"/><circle cx="1150.9" cy="211.4" r="6.8" fill="#3a2a8a"/><circle cx="1150.9" cy="211.4" r="6.2" fill="#e8e0e0" opacity="0.8"/><circle cx="1150.9" cy="211.4" r="5.5" fill="#050510"/><circle cx="1224.6" cy="260.1" r="6.8" fill="#3a2a8a"/><circle cx="1224.6" cy="260.1" r="6.2" fill="#e8e0e0" opacity="0.8"/><circle cx="1224.6" cy="260.1" r="5.5" fill="#050510"/><circle cx="1097.4" cy="268.6" r="6.8" fill="#3a2a8a"/><circle cx="1097.4" cy="268.6" r="6.2" fill="#e8e0e0" opacity="0.8"/><circle cx="1097.4" cy="268.6" r="5.5" fill="#050510"/><circle cx="1052" cy="162" r="1.2" fill="#ffd000"/></g></svg>
<div style="position:absolute;left:1016px;top:12px;width:36px;height:14px;">
<svg width="36" height="14" viewBox="0 0 36 14"><text x="0.5" y="10" font-family="Liberation Sans" font-weight="bold" font-size="10.5" fill="#000" stroke="#eee6dc" stroke-width="0.9" textLength="26" lengthAdjust="spacingAndGlyphs">ZYGO</text>
<circle cx="29.5" cy="2.5" r="0.9" fill="none" stroke="#bbb" stroke-width="0.5"/><line x1="0" y1="12" x2="33" y2="12" stroke="#7a3448" stroke-width="1"/></svg></div>
<div style="position:absolute;left:989.5px;top:317px;width:278.5px;height:23.5px;background:#3b3b3b;overflow:hidden"><div style="position:absolute;left:0;top:0;right:0;height:7.5px;background:#464950"></div><div style="position:absolute;left:5.5px;top:6px;font-family:'Liberation Sans', sans-serif;font-size:9.7px;letter-spacing:0px;color:#e4e4e4;white-space:nowrap;line-height:13px">Reference</div><div style="position:absolute;left:53.5px;top:3px;width:1px;height:20.5px;background:#262626"></div><div style="position:absolute;left:58.0px;top:6px;font-family:'Liberation Sans', sans-serif;font-size:9.7px;letter-spacing:0px;color:#e4e4e4;white-space:nowrap;line-height:13px">W: (-648.500, 1,002.269)</div><div style="position:absolute;left:165.5px;top:3px;width:1px;height:20.5px;background:#262626"></div><div style="position:absolute;left:169.79999999999995px;top:6px;font-family:'Liberation Sans', sans-serif;font-size:9.7px;letter-spacing:0px;color:#e4e4e4;white-space:nowrap;line-height:13px">Sele</div><div style="position:absolute;left:189.9000000000001px;top:3px;width:1px;height:20.5px;background:#262626"></div><div style="position:absolute;left:195.20000000000005px;top:6px;font-family:'Liberation Sans', sans-serif;font-size:9.7px;letter-spacing:0px;color:#e4e4e4;white-space:nowrap;line-height:13px">Palette Scale : Auto</div></div>
<div style="position:absolute;left:0px;top:350.5px;width:988px;height:7.5px;background:#ebebeb;"></div><div style="position:absolute;left:481px;top:352.5px;width:16px;height:2px;background:repeating-linear-gradient(90deg,#7a7a7a 0 1.5px,transparent 1.5px 3px);opacity:0.7"></div><div style="position:absolute;left:1px;top:358px;width:976px;height:293px;background:#f3f3f3;border-left:1px solid #a0a0a0;border-top:1px solid #a0a0a0;border-right:1px solid #b8b8b8"></div><div style="position:absolute;left:13px;top:371px;width:10px;height:10.5px;border:1px solid #8f9bab;background:linear-gradient(135deg,#fdfdfd,#dfe3e9)"></div><svg style="position:absolute;left:13px;top:371px" width="10" height="10.5" viewBox="0 0 10 10.5"><path d="M2.4 3.2 L4 7.2 L7 2.6" fill="none" stroke="#4a6aa8" stroke-width="1.1"/></svg><div style="position:absolute;left:26px;top:369.99px;height:13px;line-height:13px;font-family:'Liberation Sans', sans-serif;font-size:9.7px;color:#1a1a1a;white-space:nowrap;transform:scaleX(0.92);transform-origin:left;">Segmentation On</div><div style="position:absolute;left:152.5px;top:371px;width:10px;height:10.5px;border:1px solid #8f9bab;background:linear-gradient(135deg,#fdfdfd,#dfe3e9)"></div><svg style="position:absolute;left:152.5px;top:371px" width="10" height="10.5" viewBox="0 0 10 10.5"><path d="M2.4 3.2 L4 7.2 L7 2.6" fill="none" stroke="#4a6aa8" stroke-width="1.1"/></svg><div style="position:absolute;left:165.7px;top:369.99px;height:13px;line-height:13px;font-family:'Liberation Sans', sans-serif;font-size:9.7px;color:#1a1a1a;white-space:nowrap;transform:scaleX(0.92);transform-origin:left;">Immediate Update</div><div style="position:absolute;left:13.4px;top:388.3px;width:45.2px;height:18px;border:1px solid #8c8c8c;border-bottom:none;border-radius:2px 2px 0 0;background:linear-gradient(180deg,#f6f6f6,#e6e6e6)"></div><div style="position:absolute;left:20.2px;top:390.64px;height:13px;line-height:13px;font-family:'Liberation Sans', sans-serif;font-size:9.7px;color:#1a1a1a;white-space:nowrap;transform:scaleX(0.92);transform-origin:left;">Regions</div><svg style="position:absolute;left:953px;top:391.5px" width="8" height="8" viewBox="0 0 8 8"><path d="M4 0.6 Q4.5 3.4 7.4 4 Q4.5 4.6 4 7.4 Q3.5 4.6 0.6 4 Q3.5 3.4 4 0.6z" fill="#111"/></svg><div style="position:absolute;left:12px;top:405px;width:953px;height:22px;background:#555555;"></div><div style="position:absolute;left:12px;top:405px;width:2px;height:22px;background:#3a3a3a;"></div><div style="position:absolute;left:13px;top:405.5px;width:92px;height:21.0px;background:linear-gradient(180deg,#e4e6ea,#cfd2d8 50%,#bfc2c8 51%,#c6c9ce);border-radius:2px 0 0 2px"></div><div style="position:absolute;left:105px;top:405.5px;width:10px;height:21.0px;background:linear-gradient(180deg,#a9acb2,#8e9197);border-radius:0 2px 2px 0"></div><div style="position:absolute;left:17.2px;top:410.5px;width:1.2px;height:1.2px;background:#1a1a1a;"></div><div style="position:absolute;left:17.2px;top:413.5px;width:1.2px;height:1.2px;background:#1a1a1a;"></div><div style="position:absolute;left:17.2px;top:416.5px;width:1.2px;height:1.2px;background:#1a1a1a;"></div><div style="position:absolute;left:17.2px;top:419.5px;width:1.2px;height:1.2px;background:#1a1a1a;"></div><div style="position:absolute;left:17.2px;top:422.5px;width:1.2px;height:1.2px;background:#1a1a1a;"></div><svg style="position:absolute;left:106.0px;top:415px" width="8" height="8" viewBox="0 0 8 8"><rect x="1" y="0.5" width="6" height="1.2" fill="#111"/><path d="M1 3 L7 3 L4 6.5z" fill="#111"/></svg><div style="position:absolute;left:118px;top:405.5px;width:295.5px;height:21.0px;background:linear-gradient(180deg,#e4e6ea,#cfd2d8 50%,#bfc2c8 51%,#c6c9ce);border-radius:2px 0 0 2px"></div><div style="position:absolute;left:413.5px;top:405.5px;width:10.100000000000023px;height:21.0px;background:linear-gradient(180deg,#a9acb2,#8e9197);border-radius:0 2px 2px 0"></div><div style="position:absolute;left:122.2px;top:410.5px;width:1.2px;height:1.2px;background:#1a1a1a;"></div><div style="position:absolute;left:122.2px;top:413.5px;width:1.2px;height:1.2px;background:#1a1a1a;"></div><div style="position:absolute;left:122.2px;top:416.5px;width:1.2px;height:1.2px;background:#1a1a1a;"></div><div style="position:absolute;left:122.2px;top:419.5px;width:1.2px;height:1.2px;background:#1a1a1a;"></div><div style="position:absolute;left:122.2px;top:422.5px;width:1.2px;height:1.2px;background:#1a1a1a;"></div><svg style="position:absolute;left:414.55px;top:415px" width="8" height="8" viewBox="0 0 8 8"><rect x="1" y="0.5" width="6" height="1.2" fill="#111"/><path d="M1 3 L7 3 L4 6.5z" fill="#111"/></svg><div style="position:absolute;left:427px;top:405.5px;width:79px;height:21.0px;background:linear-gradient(180deg,#e4e6ea,#cfd2d8 50%,#bfc2c8 51%,#c6c9ce);border-radius:2px 0 0 2px"></div><div style="position:absolute;left:506px;top:405.5px;width:9.700000000000045px;height:21.0px;background:linear-gradient(180deg,#a9acb2,#8e9197);border-radius:0 2px 2px 0"></div><div style="position:absolute;left:431.2px;top:410.5px;width:1.2px;height:1.2px;background:#1a1a1a;"></div><div style="position:absolute;left:431.2px;top:413.5px;width:1.2px;height:1.2px;background:#1a1a1a;"></div><div style="position:absolute;left:431.2px;top:416.5px;width:1.2px;height:1.2px;background:#1a1a1a;"></div><div style="position:absolute;left:431.2px;top:419.5px;width:1.2px;height:1.2px;background:#1a1a1a;"></div><div style="position:absolute;left:431.2px;top:422.5px;width:1.2px;height:1.2px;background:#1a1a1a;"></div><svg style="position:absolute;left:506.85px;top:415px" width="8" height="8" viewBox="0 0 8 8"><rect x="1" y="0.5" width="6" height="1.2" fill="#111"/><path d="M1 3 L7 3 L4 6.5z" fill="#111"/></svg><div style="position:absolute;left:519px;top:405.5px;width:92px;height:21.0px;background:linear-gradient(180deg,#e4e6ea,#cfd2d8 50%,#bfc2c8 51%,#c6c9ce);border-radius:2px 0 0 2px"></div><div style="position:absolute;left:611px;top:405.5px;width:9.5px;height:21.0px;background:linear-gradient(180deg,#a9acb2,#8e9197);border-radius:0 2px 2px 0"></div><div style="position:absolute;left:523.2px;top:410.5px;width:1.2px;height:1.2px;background:#1a1a1a;"></div><div style="position:absolute;left:523.2px;top:413.5px;width:1.2px;height:1.2px;background:#1a1a1a;"></div><div style="position:absolute;left:523.2px;top:416.5px;width:1.2px;height:1.2px;background:#1a1a1a;"></div><div style="position:absolute;left:523.2px;top:419.5px;width:1.2px;height:1.2px;background:#1a1a1a;"></div><div style="position:absolute;left:523.2px;top:422.5px;width:1.2px;height:1.2px;background:#1a1a1a;"></div><svg style="position:absolute;left:611.75px;top:415px" width="8" height="8" viewBox="0 0 8 8"><rect x="1" y="0.5" width="6" height="1.2" fill="#111"/><path d="M1 3 L7 3 L4 6.5z" fill="#111"/></svg>
<svg style="position:absolute;left:0;top:0" width="1269" height="651" viewBox="0 0 1269 651"><text x="31.5" y="422" text-anchor="middle" font-family="Liberation Sans" font-weight="bold" font-size="17" fill="#1e5a8c">Σ</text><circle cx="51.5" cy="415.5" r="6.3" fill="#2a7fc0"/><circle cx="51.5" cy="415.5" r="6.3" fill="none" stroke="#1a5a90" stroke-width="0.6"/><path d="M47.5 418 Q48.5 412 50 414 Q51 418 52 413 Q53 411 54 414 L55.5 416" fill="none" stroke="#e8f4ff" stroke-width="0.9"/><path d="M69.5 410 L69.5 420 L71.8 418 L73.5 421.5 L75 420.8 L73.3 417.5 L76 417.5z" fill="#e8e8ea" stroke="#a8aab0" stroke-width="0.7"/><rect x="86" y="410" width="11" height="11" fill="#f6f2e0" stroke="#8a9ab0" stroke-width="0.7"/><rect x="86" y="410" width="11" height="2.5" fill="#6a9ad8"/><path d="M91 420 L96.5 413.5" stroke="#e0a020" stroke-width="2"/><rect x="86.5" y="414" width="3" height="6" fill="#3a6ab0" opacity="0.5"/><path d="M131 416 L135 420.5 L143 411" fill="none" stroke="#4cae3c" stroke-width="2.6" stroke-linejoin="round"/><text x="438" y="419.5" font-family="Liberation Sans" font-size="10" fill="#222">View</text><rect x="462.5" y="406" width="19" height="20" fill="#f8b468"/><rect x="465" y="410" width="14" height="11" fill="#e8f0fa" stroke="#5a7ab8" stroke-width="0.7"/><rect x="465" y="410" width="14" height="2.5" fill="#7aa0d8"/><path d="M467 415 h4 M467 418 h4 M473 415 h4 M473 418 h4" stroke="#5a7ab8" stroke-width="0.8"/><path d="M485.5 409.5 h8 l2 8 h-8z" fill="#a8c8ee" stroke="#6a9ad0" stroke-width="0.6"/><rect x="489" y="414" width="10" height="7.5" fill="#f4f8fc" stroke="#7aa0d0" stroke-width="0.7"/><rect x="489" y="414" width="10" height="2" fill="#9ac0ec"/><rect x="533" y="409.5" width="8" height="6" fill="#c8dcf4" stroke="#7a8aa0" stroke-width="0.6"/><rect x="531" y="414.5" width="12" height="6" rx="1" fill="#eef0f4" stroke="#5a6070" stroke-width="0.8"/><rect x="551" y="409" width="11" height="12" fill="#e6f4e6" stroke="#2e8a3e" stroke-width="1"/><text x="556.5" y="419.5" text-anchor="middle" font-family="Liberation Sans" font-weight="bold" font-size="9" fill="#2a8a3a">x</text><rect x="571" y="410" width="11" height="11" fill="#fbeaea" stroke="#d02020" stroke-width="1.1"/><path d="M573 419 Q576 411 578 409 Q579 416 584 415" fill="none" stroke="#d02020" stroke-width="1.1"/><path d="M593 410 h10 v7 l-3 4 h-7z" fill="#f0f4f8" stroke="#d8dee6" stroke-width="0.7"/><rect x="593" y="409.5" width="10" height="1.6" fill="#4ab8e8"/></svg><div style="position:absolute;left:149.5px;top:407.7px;width:128px;height:15.5px;border:1px solid #a8abb0;background:#efefef"></div><div style="position:absolute;left:265px;top:412px;font-family:'Liberation Sans', sans-serif;font-size:9px;color:#222;line-height:8px;letter-spacing:-0.5px">•••</div><div style="position:absolute;left:283px;top:407.7px;width:124.6px;height:15.5px;border:1px solid #a8abb0;background:#fff"></div><svg style="position:absolute;left:398.5px;top:413.5px" width="6" height="4" viewBox="0 0 6 4"><path d="M0.5 0.5 L5.5 0.5 L3 3.5z" fill="#222"/></svg>
<div style="position:absolute;left:13px;top:427px;width:949px;height:230px;background:#ffffff;border:1px solid #8c9096"></div><div style="position:absolute;left:14px;top:428px;width:947px;height:49px;background:linear-gradient(180deg,#ffffff,#f4f5f7 40%,#e4e6ea 80%,#dcdfe3);"></div><div style="position:absolute;left:14px;top:477px;width:947px;height:1px;background:#8e9298;"></div><div style="position:absolute;left:14px;top:428px;width:12.5px;height:49px;background:linear-gradient(180deg,#fafafa,#e2e4e8);"></div><div style="position:absolute;left:14px;top:477.5px;width:12.5px;height:17.56px;background:linear-gradient(180deg,#f6f6f6,#e6e7e9 70%,#dadbdd);border-bottom:1px solid #a8aaae"></div><div style="position:absolute;left:14px;top:495.06px;width:12.5px;height:17.56px;background:linear-gradient(180deg,#f6f6f6,#e6e7e9 70%,#dadbdd);border-bottom:1px solid #a8aaae"></div><div style="position:absolute;left:14px;top:512.62px;width:12.5px;height:17.56px;background:linear-gradient(180deg,#f6f6f6,#e6e7e9 70%,#dadbdd);border-bottom:1px solid #a8aaae"></div><div style="position:absolute;left:14px;top:530.18px;width:12.5px;height:17.56px;background:linear-gradient(180deg,#f6f6f6,#e6e7e9 70%,#dadbdd);border-bottom:1px solid #a8aaae"></div><div style="position:absolute;left:14px;top:547.74px;width:12.5px;height:17.56px;background:linear-gradient(180deg,#f6f6f6,#e6e7e9 70%,#dadbdd);border-bottom:1px solid #a8aaae"></div><div style="position:absolute;left:14px;top:565.3px;width:12.5px;height:17.56px;background:linear-gradient(180deg,#f6f6f6,#e6e7e9 70%,#dadbdd);border-bottom:1px solid #a8aaae"></div><div style="position:absolute;left:14px;top:582.86px;width:12.5px;height:17.56px;background:linear-gradient(180deg,#f6f6f6,#e6e7e9 70%,#dadbdd);border-bottom:1px solid #a8aaae"></div><div style="position:absolute;left:14px;top:600.42px;width:12.5px;height:17.56px;background:linear-gradient(180deg,#f6f6f6,#e6e7e9 70%,#dadbdd);border-bottom:1px solid #a8aaae"></div><div style="position:absolute;left:14px;top:617.98px;width:12.5px;height:17.56px;background:linear-gradient(180deg,#f6f6f6,#e6e7e9 70%,#dadbdd);border-bottom:1px solid #a8aaae"></div><div style="position:absolute;left:14px;top:635.54px;width:12.5px;height:17.56px;background:linear-gradient(180deg,#f6f6f6,#e6e7e9 70%,#dadbdd);border-bottom:1px solid #a8aaae"></div><div style="position:absolute;left:14px;top:653.1px;width:12.5px;height:17.56px;background:linear-gradient(180deg,#f6f6f6,#e6e7e9 70%,#dadbdd);border-bottom:1px solid #a8aaae"></div><div style="position:absolute;left:26px;top:428px;width:1px;height:230px;background:#a9acb1;"></div><div style="position:absolute;left:89.0px;top:428px;width:1px;height:49px;background:#a6a9ae;"></div><div style="position:absolute;left:152.0px;top:428px;width:1px;height:49px;background:#a6a9ae;"></div><div style="position:absolute;left:214.25px;top:428px;width:1px;height:49px;background:#a6a9ae;"></div><div style="position:absolute;left:277.0px;top:428px;width:1px;height:49px;background:#a6a9ae;"></div><div style="position:absolute;left:339.0px;top:428px;width:1px;height:49px;background:#a6a9ae;"></div><div style="position:absolute;left:401.9px;top:428px;width:1px;height:49px;background:#a6a9ae;"></div><div style="position:absolute;left:494.8px;top:428px;width:1px;height:49px;background:#a6a9ae;"></div><div style="position:absolute;left:557.1px;top:428px;width:1px;height:49px;background:#a6a9ae;"></div><div style="position:absolute;left:27px;top:494.06px;width:530.6px;height:1px;background:#efefef;"></div><div style="position:absolute;left:27px;top:511.62px;width:530.6px;height:1px;background:#efefef;"></div><div style="position:absolute;left:27px;top:529.18px;width:530.6px;height:1px;background:#efefef;"></div><div style="position:absolute;left:27px;top:546.7399999999999px;width:530.6px;height:1px;background:#efefef;"></div><div style="position:absolute;left:27px;top:564.3px;width:530.6px;height:1px;background:#efefef;"></div><div style="position:absolute;left:27px;top:581.8599999999999px;width:530.6px;height:1px;background:#efefef;"></div><div style="position:absolute;left:27px;top:599.42px;width:530.6px;height:1px;background:#efefef;"></div><div style="position:absolute;left:27px;top:616.9799999999999px;width:530.6px;height:1px;background:#efefef;"></div><div style="position:absolute;left:27px;top:634.54px;width:530.6px;height:1px;background:#efefef;"></div><div style="position:absolute;left:27px;top:652.0999999999999px;width:530.6px;height:1px;background:#efefef;"></div><div style="position:absolute;left:27px;top:669.66px;width:530.6px;height:1px;background:#efefef;"></div><div style="position:absolute;left:89.0px;top:477.5px;width:1px;height:180px;background:#e6e6e6;"></div><div style="position:absolute;left:152.0px;top:477.5px;width:1px;height:180px;background:#e6e6e6;"></div><div style="position:absolute;left:214.25px;top:477.5px;width:1px;height:180px;background:#e6e6e6;"></div><div style="position:absolute;left:277.0px;top:477.5px;width:1px;height:180px;background:#e6e6e6;"></div><div style="position:absolute;left:339.0px;top:477.5px;width:1px;height:180px;background:#e6e6e6;"></div><div style="position:absolute;left:401.9px;top:477.5px;width:1px;height:180px;background:#e6e6e6;"></div><div style="position:absolute;left:494.8px;top:477.5px;width:1px;height:180px;background:#e6e6e6;"></div><div style="position:absolute;left:557.1px;top:477.5px;width:1px;height:180px;background:#e6e6e6;"></div><div style="position:absolute;left:27px;top:601.42px;width:530.6px;height:16.459999999999997px;background:#3266c2;"></div><div style="position:absolute;left:89.0px;top:601.42px;width:1px;height:16.459999999999997px;background:#d8e2f4;opacity:0.55"></div><div style="position:absolute;left:152.0px;top:601.42px;width:1px;height:16.459999999999997px;background:#d8e2f4;opacity:0.55"></div><div style="position:absolute;left:214.25px;top:601.42px;width:1px;height:16.459999999999997px;background:#d8e2f4;opacity:0.55"></div><div style="position:absolute;left:277.0px;top:601.42px;width:1px;height:16.459999999999997px;background:#d8e2f4;opacity:0.55"></div><div style="position:absolute;left:339.0px;top:601.42px;width:1px;height:16.459999999999997px;background:#d8e2f4;opacity:0.55"></div><div style="position:absolute;left:401.9px;top:601.42px;width:1px;height:16.459999999999997px;background:#d8e2f4;opacity:0.55"></div><div style="position:absolute;left:494.8px;top:601.42px;width:1px;height:16.459999999999997px;background:#d8e2f4;opacity:0.55"></div><svg style="position:absolute;left:16px;top:603.42px" width="9" height="11" viewBox="0 0 9 11"><path d="M5.5 0.8 L7.5 1.6 L4 9.5 L2 10 L1.6 8.6z" fill="none" stroke="#999" stroke-width="0.8"/></svg><div style="position:absolute;left:30.8px;top:446.80px;height:13px;line-height:13px;font-family:'Liberation Sans', sans-serif;font-size:9.7px;color:#1a1a1a;white-space:nowrap;transform:scaleX(0.92);transform-origin:left;">Name</div><div style="position:absolute;left:93.8px;top:446.80px;height:13px;line-height:13px;font-family:'Liberation Sans', sans-serif;font-size:9.7px;color:#1a1a1a;white-space:nowrap;transform:scaleX(0.92);transform-origin:left;">Test Icon</div><div style="position:absolute;left:156.3px;top:446.80px;height:13px;line-height:13px;font-family:'Liberation Sans', sans-serif;font-size:9.7px;color:#1a1a1a;white-space:nowrap;transform:scaleX(0.92);transform-origin:left;">NPoints</div><div style="position:absolute;left:218.4px;top:446.80px;height:13px;line-height:13px;font-family:'Liberation Sans', sans-serif;font-size:9.7px;color:#1a1a1a;white-space:nowrap;transform:scaleX(0.92);transform-origin:left;">PV (µm)</div><div style="position:absolute;left:281.1px;top:446.80px;height:13px;line-height:13px;font-family:'Liberation Sans', sans-serif;font-size:9.7px;color:#1a1a1a;white-space:nowrap;transform:scaleX(0.92);transform-origin:left;">RMS (µm)</div><div style="position:absolute;left:344px;top:446.80px;height:13px;line-height:13px;font-family:'Liberation Sans', sans-serif;font-size:9.7px;color:#1a1a1a;white-space:nowrap;transform:scaleX(0.92);transform-origin:left;">Mean (µm)</div><div style="position:absolute;left:422.5px;top:441.50px;height:13px;line-height:13px;font-family:'Liberation Sans', sans-serif;font-size:9.7px;color:#1a1a1a;white-space:nowrap;transform:scaleX(0.92);transform-origin:left;">Circle</div><div style="position:absolute;left:422.5px;top:452.50px;height:13px;line-height:13px;font-family:'Liberation Sans', sans-serif;font-size:9.7px;color:#1a1a1a;white-space:nowrap;transform:scaleX(0.92);transform-origin:left;">Diameter (µm)</div><div style="position:absolute;left:514px;top:441.50px;height:13px;line-height:13px;font-family:'Liberation Sans', sans-serif;font-size:9.7px;color:#1a1a1a;white-space:nowrap;transform:scaleX(0.92);transform-origin:left;">Circula...</div><div style="position:absolute;left:514px;top:452.50px;height:13px;line-height:13px;font-family:'Liberation Sans', sans-serif;font-size:9.7px;color:#1a1a1a;white-space:nowrap;transform:scaleX(0.92);transform-origin:left;">Ratio</div><svg style="position:absolute;left:406px;top:445px" width="15" height="15" viewBox="0 0 15 15"><path d="M2.2 12.8 L9 6" stroke="#7eaee8" stroke-width="3.2" stroke-linecap="round"/><path d="M8 4.5 Q9 1.5 12 2 L10.5 4 L11.5 5 L13.5 3.5 Q14 6.5 10.5 7z" fill="#b8bcc4"/></svg><svg style="position:absolute;left:499px;top:445px" width="15" height="15" viewBox="0 0 15 15"><path d="M2.2 12.8 L9 6" stroke="#7eaee8" stroke-width="3.2" stroke-linecap="round"/><path d="M8 4.5 Q9 1.5 12 2 L10.5 4 L11.5 5 L13.5 3.5 Q14 6.5 10.5 7z" fill="#b8bcc4"/></svg><svg style="position:absolute;left:483px;top:449px" width="8" height="5" viewBox="0 0 8 5"><path d="M0.5 4.5 L4 0.8 L7.5 4.5z" fill="#a4a8ae"/></svg><div style="position:absolute;left:29.8px;top:479.94px;height:13px;line-height:13px;font-family:'Liberation Sans', sans-serif;font-size:9.7px;color:#1a1a1a;white-space:nowrap;transform:scaleX(0.89);transform-origin:left;">Peak 1</div><div style="position:absolute;left:152.25px;top:479.94px;height:13px;line-height:13px;font-family:'Liberation Sans', sans-serif;font-size:9.7px;color:#1a1a1a;white-space:nowrap;transform:scaleX(0.92);transform-origin:right;width:60px;text-align:right;">1500.00</div><div style="position:absolute;left:215.0px;top:479.94px;height:13px;line-height:13px;font-family:'Liberation Sans', sans-serif;font-size:9.7px;color:#1a1a1a;white-space:nowrap;transform:scaleX(0.92);transform-origin:right;width:60px;text-align:right;">1.802</div><div style="position:absolute;left:277.0px;top:479.94px;height:13px;line-height:13px;font-family:'Liberation Sans', sans-serif;font-size:9.7px;color:#1a1a1a;white-space:nowrap;transform:scaleX(0.92);transform-origin:right;width:60px;text-align:right;">2.004</div><div style="position:absolute;left:339.9px;top:479.94px;height:13px;line-height:13px;font-family:'Liberation Sans', sans-serif;font-size:9.7px;color:#1a1a1a;white-space:nowrap;transform:scaleX(0.92);transform-origin:right;width:60px;text-align:right;">1.972</div><div style="position:absolute;left:29.8px;top:497.50px;height:13px;line-height:13px;font-family:'Liberation Sans', sans-serif;font-size:9.7px;color:#1a1a1a;white-space:nowrap;transform:scaleX(0.89);transform-origin:left;">Peak 1</div><div style="position:absolute;left:152.25px;top:497.50px;height:13px;line-height:13px;font-family:'Liberation Sans', sans-serif;font-size:9.7px;color:#1a1a1a;white-space:nowrap;transform:scaleX(0.92);transform-origin:right;width:60px;text-align:right;">1171.00</div><div style="position:absolute;left:215.0px;top:497.50px;height:13px;line-height:13px;font-family:'Liberation Sans', sans-serif;font-size:9.7px;color:#1a1a1a;white-space:nowrap;transform:scaleX(0.92);transform-origin:right;width:60px;text-align:right;">1.177</div><div style="position:absolute;left:277.0px;top:497.50px;height:13px;line-height:13px;font-family:'Liberation Sans', sans-serif;font-size:9.7px;color:#1a1a1a;white-space:nowrap;transform:scaleX(0.92);transform-origin:right;width:60px;text-align:right;">1.868</div><div style="position:absolute;left:339.9px;top:497.50px;height:13px;line-height:13px;font-family:'Liberation Sans', sans-serif;font-size:9.7px;color:#1a1a1a;white-space:nowrap;transform:scaleX(0.92);transform-origin:right;width:60px;text-align:right;">1.850</div><div style="position:absolute;left:29.8px;top:515.06px;height:13px;line-height:13px;font-family:'Liberation Sans', sans-serif;font-size:9.7px;color:#1a1a1a;white-space:nowrap;transform:scaleX(0.89);transform-origin:left;">Peak 1</div><div style="position:absolute;left:152.25px;top:515.06px;height:13px;line-height:13px;font-family:'Liberation Sans', sans-serif;font-size:9.7px;color:#1a1a1a;white-space:nowrap;transform:scaleX(0.92);transform-origin:right;width:60px;text-align:right;">1153.00</div><div style="position:absolute;left:215.0px;top:515.06px;height:13px;line-height:13px;font-family:'Liberation Sans', sans-serif;font-size:9.7px;color:#1a1a1a;white-space:nowrap;transform:scaleX(0.92);transform-origin:right;width:60px;text-align:right;">1.035</div><div style="position:absolute;left:277.0px;top:515.06px;height:13px;line-height:13px;font-family:'Liberation Sans', sans-serif;font-size:9.7px;color:#1a1a1a;white-space:nowrap;transform:scaleX(0.92);transform-origin:right;width:60px;text-align:right;">1.838</div><div style="position:absolute;left:339.9px;top:515.06px;height:13px;line-height:13px;font-family:'Liberation Sans', sans-serif;font-size:9.7px;color:#1a1a1a;white-space:nowrap;transform:scaleX(0.92);transform-origin:right;width:60px;text-align:right;">1.824</div><div style="position:absolute;left:29.8px;top:532.62px;height:13px;line-height:13px;font-family:'Liberation Sans', sans-serif;font-size:9.7px;color:#1a1a1a;white-space:nowrap;transform:scaleX(0.89);transform-origin:left;">Peak 1</div><div style="position:absolute;left:152.25px;top:532.62px;height:13px;line-height:13px;font-family:'Liberation Sans', sans-serif;font-size:9.7px;color:#1a1a1a;white-space:nowrap;transform:scaleX(0.92);transform-origin:right;width:60px;text-align:right;">1134.00</div><div style="position:absolute;left:215.0px;top:532.62px;height:13px;line-height:13px;font-family:'Liberation Sans', sans-serif;font-size:9.7px;color:#1a1a1a;white-space:nowrap;transform:scaleX(0.92);transform-origin:right;width:60px;text-align:right;">1.437</div><div style="position:absolute;left:277.0px;top:532.62px;height:13px;line-height:13px;font-family:'Liberation Sans', sans-serif;font-size:9.7px;color:#1a1a1a;white-space:nowrap;transform:scaleX(0.92);transform-origin:right;width:60px;text-align:right;">1.984</div><div style="position:absolute;left:339.9px;top:532.62px;height:13px;line-height:13px;font-family:'Liberation Sans', sans-serif;font-size:9.7px;color:#1a1a1a;white-space:nowrap;transform:scaleX(0.92);transform-origin:right;width:60px;text-align:right;">1.965</div><div style="position:absolute;left:29.8px;top:550.18px;height:13px;line-height:13px;font-family:'Liberation Sans', sans-serif;font-size:9.7px;color:#1a1a1a;white-space:nowrap;transform:scaleX(0.89);transform-origin:left;">Peak 1</div><div style="position:absolute;left:152.25px;top:550.18px;height:13px;line-height:13px;font-family:'Liberation Sans', sans-serif;font-size:9.7px;color:#1a1a1a;white-space:nowrap;transform:scaleX(0.92);transform-origin:right;width:60px;text-align:right;">1108.00</div><div style="position:absolute;left:215.0px;top:550.18px;height:13px;line-height:13px;font-family:'Liberation Sans', sans-serif;font-size:9.7px;color:#1a1a1a;white-space:nowrap;transform:scaleX(0.92);transform-origin:right;width:60px;text-align:right;">1.153</div><div style="position:absolute;left:277.0px;top:550.18px;height:13px;line-height:13px;font-family:'Liberation Sans', sans-serif;font-size:9.7px;color:#1a1a1a;white-space:nowrap;transform:scaleX(0.92);transform-origin:right;width:60px;text-align:right;">1.885</div><div style="position:absolute;left:339.9px;top:550.18px;height:13px;line-height:13px;font-family:'Liberation Sans', sans-serif;font-size:9.7px;color:#1a1a1a;white-space:nowrap;transform:scaleX(0.92);transform-origin:right;width:60px;text-align:right;">1.870</div><div style="position:absolute;left:29.8px;top:567.74px;height:13px;line-height:13px;font-family:'Liberation Sans', sans-serif;font-size:9.7px;color:#1a1a1a;white-space:nowrap;transform:scaleX(0.89);transform-origin:left;">Peak 1</div><div style="position:absolute;left:152.25px;top:567.74px;height:13px;line-height:13px;font-family:'Liberation Sans', sans-serif;font-size:9.7px;color:#1a1a1a;white-space:nowrap;transform:scaleX(0.92);transform-origin:right;width:60px;text-align:right;">1087.00</div><div style="position:absolute;left:215.0px;top:567.74px;height:13px;line-height:13px;font-family:'Liberation Sans', sans-serif;font-size:9.7px;color:#1a1a1a;white-space:nowrap;transform:scaleX(0.92);transform-origin:right;width:60px;text-align:right;">1.273</div><div style="position:absolute;left:277.0px;top:567.74px;height:13px;line-height:13px;font-family:'Liberation Sans', sans-serif;font-size:9.7px;color:#1a1a1a;white-space:nowrap;transform:scaleX(0.92);transform-origin:right;width:60px;text-align:right;">1.747</div><div style="position:absolute;left:339.9px;top:567.74px;height:13px;line-height:13px;font-family:'Liberation Sans', sans-serif;font-size:9.7px;color:#1a1a1a;white-space:nowrap;transform:scaleX(0.92);transform-origin:right;width:60px;text-align:right;">1.726</div><div style="position:absolute;left:29.8px;top:585.30px;height:13px;line-height:13px;font-family:'Liberation Sans', sans-serif;font-size:9.7px;color:#1a1a1a;white-space:nowrap;transform:scaleX(0.89);transform-origin:left;">Peak 1</div><div style="position:absolute;left:152.25px;top:585.30px;height:13px;line-height:13px;font-family:'Liberation Sans', sans-serif;font-size:9.7px;color:#1a1a1a;white-space:nowrap;transform:scaleX(0.92);transform-origin:right;width:60px;text-align:right;">1059.00</div><div style="position:absolute;left:215.0px;top:585.30px;height:13px;line-height:13px;font-family:'Liberation Sans', sans-serif;font-size:9.7px;color:#1a1a1a;white-space:nowrap;transform:scaleX(0.92);transform-origin:right;width:60px;text-align:right;">1.613</div><div style="position:absolute;left:277.0px;top:585.30px;height:13px;line-height:13px;font-family:'Liberation Sans', sans-serif;font-size:9.7px;color:#1a1a1a;white-space:nowrap;transform:scaleX(0.92);transform-origin:right;width:60px;text-align:right;">1.887</div><div style="position:absolute;left:339.9px;top:585.30px;height:13px;line-height:13px;font-family:'Liberation Sans', sans-serif;font-size:9.7px;color:#1a1a1a;white-space:nowrap;transform:scaleX(0.92);transform-origin:right;width:60px;text-align:right;">1.870</div><div style="position:absolute;left:29.8px;top:602.86px;height:13px;line-height:13px;font-family:'Liberation Sans', sans-serif;font-size:9.7px;color:#ffffff;white-space:nowrap;transform:scaleX(0.89);transform-origin:left;">Peak 1</div><div style="position:absolute;left:152.25px;top:602.86px;height:13px;line-height:13px;font-family:'Liberation Sans', sans-serif;font-size:9.7px;color:#ffffff;white-space:nowrap;transform:scaleX(0.92);transform-origin:right;width:60px;text-align:right;">1032.00</div><div style="position:absolute;left:215.0px;top:602.86px;height:13px;line-height:13px;font-family:'Liberation Sans', sans-serif;font-size:9.7px;color:#ffffff;white-space:nowrap;transform:scaleX(0.92);transform-origin:right;width:60px;text-align:right;">0.653</div><div style="position:absolute;left:277.0px;top:602.86px;height:13px;line-height:13px;font-family:'Liberation Sans', sans-serif;font-size:9.7px;color:#ffffff;white-space:nowrap;transform:scaleX(0.92);transform-origin:right;width:60px;text-align:right;">1.583</div><div style="position:absolute;left:339.9px;top:602.86px;height:13px;line-height:13px;font-family:'Liberation Sans', sans-serif;font-size:9.7px;color:#ffffff;white-space:nowrap;transform:scaleX(0.92);transform-origin:right;width:60px;text-align:right;">1.574</div><div style="position:absolute;left:29.8px;top:620.42px;height:13px;line-height:13px;font-family:'Liberation Sans', sans-serif;font-size:9.7px;color:#1a1a1a;white-space:nowrap;transform:scaleX(0.89);transform-origin:left;">Peak 1</div><div style="position:absolute;left:152.25px;top:620.42px;height:13px;line-height:13px;font-family:'Liberation Sans', sans-serif;font-size:9.7px;color:#1a1a1a;white-space:nowrap;transform:scaleX(0.92);transform-origin:right;width:60px;text-align:right;">1016.00</div><div style="position:absolute;left:215.0px;top:620.42px;height:13px;line-height:13px;font-family:'Liberation Sans', sans-serif;font-size:9.7px;color:#1a1a1a;white-space:nowrap;transform:scaleX(0.92);transform-origin:right;width:60px;text-align:right;">1.508</div><div style="position:absolute;left:277.0px;top:620.42px;height:13px;line-height:13px;font-family:'Liberation Sans', sans-serif;font-size:9.7px;color:#1a1a1a;white-space:nowrap;transform:scaleX(0.92);transform-origin:right;width:60px;text-align:right;">1.865</div><div style="position:absolute;left:339.9px;top:620.42px;height:13px;line-height:13px;font-family:'Liberation Sans', sans-serif;font-size:9.7px;color:#1a1a1a;white-space:nowrap;transform:scaleX(0.92);transform-origin:right;width:60px;text-align:right;">1.838</div><div style="position:absolute;left:29.8px;top:637.98px;height:13px;line-height:13px;font-family:'Liberation Sans', sans-serif;font-size:9.7px;color:#1a1a1a;white-space:nowrap;transform:scaleX(0.89);transform-origin:left;">Peak 1</div><div style="position:absolute;left:152.25px;top:637.98px;height:13px;line-height:13px;font-family:'Liberation Sans', sans-serif;font-size:9.7px;color:#1a1a1a;white-space:nowrap;transform:scaleX(0.92);transform-origin:right;width:60px;text-align:right;">991.00</div><div style="position:absolute;left:215.0px;top:637.98px;height:13px;line-height:13px;font-family:'Liberation Sans', sans-serif;font-size:9.7px;color:#1a1a1a;white-space:nowrap;transform:scaleX(0.92);transform-origin:right;width:60px;text-align:right;">1.588</div><div style="position:absolute;left:277.0px;top:637.98px;height:13px;line-height:13px;font-family:'Liberation Sans', sans-serif;font-size:9.7px;color:#1a1a1a;white-space:nowrap;transform:scaleX(0.92);transform-origin:right;width:60px;text-align:right;">1.838</div><div style="position:absolute;left:339.9px;top:637.98px;height:13px;line-height:13px;font-family:'Liberation Sans', sans-serif;font-size:9.7px;color:#1a1a1a;white-space:nowrap;transform:scaleX(0.92);transform-origin:right;width:60px;text-align:right;">1.814</div><svg style="position:absolute;left:0;top:0" width="1269" height="651" viewBox="0 0 1269 651"><defs><radialGradient id="tb0" cx="0.45" cy="0.55" r="0.7"><stop offset="0" stop-color="#f0d800"/><stop offset="0.5" stop-color="#e8e000"/><stop offset="0.75" stop-color="#50d030"/><stop offset="1" stop-color="#108a9a"/></radialGradient></defs><path d="M112.5 484.58 Q113.5 479.58 118.5 479.78 Q124.0 480.58 124.0 485.58 Q122.5 491.58 117.5 493.08 Q112.5 491.58 112.0 487.58Z" fill="url(#tb0)" stroke="#2a8a8a" stroke-width="0.5" stroke-opacity="0.6"/><ellipse cx="129.5" cy="486.58" rx="4" ry="3.4" fill="#ff8a10"/><path d="M123.5 483.58 L126.5 485.58" stroke="#2a9a9a" stroke-width="1.5"/><defs><radialGradient id="tb1" cx="0.65" cy="0.65" r="0.7"><stop offset="0" stop-color="#ff3c00"/><stop offset="0.30" stop-color="#ff7000"/><stop offset="0.50" stop-color="#f8c800"/><stop offset="0.80" stop-color="#e8e800"/><stop offset="0.92" stop-color="#30d020"/><stop offset="1" stop-color="#109a80"/></radialGradient></defs><path d="M115.0 502.14 Q116.0 497.14 121.5 496.94 Q127.5 497.64 128.3 503.64 Q128.0 509.64 122.0 511.14 Q116.0 510.14 114.7 505.64Z" fill="url(#tb1)" stroke="#2a8a8a" stroke-width="0.5" stroke-opacity="0.6"/><defs><radialGradient id="tb2" cx="0.6" cy="0.6" r="0.7"><stop offset="0" stop-color="#ff3c00"/><stop offset="0.33" stop-color="#ff7000"/><stop offset="0.55" stop-color="#f8c800"/><stop offset="0.80" stop-color="#e8e800"/><stop offset="0.92" stop-color="#30d020"/><stop offset="1" stop-color="#109a80"/></radialGradient></defs><path d="M115.0 519.6999999999999 Q116.0 514.6999999999999 121.5 514.4999999999999 Q127.5 515.1999999999999 128.3 521.1999999999999 Q128.0 527.1999999999999 122.0 528.6999999999999 Q116.0 527.6999999999999 114.7 523.1999999999999Z" fill="url(#tb2)" stroke="#2a8a8a" stroke-width="0.5" stroke-opacity="0.6"/><defs><radialGradient id="tb3" cx="0.55" cy="0.5" r="0.7"><stop offset="0" stop-color="#ff3c00"/><stop offset="0.36" stop-color="#ff7000"/><stop offset="0.60" stop-color="#f8c800"/><stop offset="0.85" stop-color="#e8e800"/><stop offset="0.97" stop-color="#30d020"/><stop offset="1" stop-color="#109a80"/></radialGradient></defs><path d="M115.0 537.2599999999999 Q116.0 532.2599999999999 121.5 532.0599999999998 Q127.5 532.7599999999999 128.3 538.7599999999999 Q128.0 544.7599999999999 122.0 546.2599999999999 Q116.0 545.2599999999999 114.7 540.7599999999999Z" fill="url(#tb3)" stroke="#2a8a8a" stroke-width="0.5" stroke-opacity="0.6"/><defs><radialGradient id="tb4" cx="0.6" cy="0.55" r="0.7"><stop offset="0" stop-color="#ff3c00"/><stop offset="0.33" stop-color="#ff7000"/><stop offset="0.55" stop-color="#f8c800"/><stop offset="0.82" stop-color="#e8e800"/><stop offset="0.94" stop-color="#30d020"/><stop offset="1" stop-color="#109a80"/></radialGradient></defs><path d="M115.0 554.8199999999999 Q116.0 549.8199999999999 121.5 549.6199999999999 Q127.5 550.3199999999999 128.3 556.3199999999999 Q128.0 562.3199999999999 122.0 563.8199999999999 Q116.0 562.8199999999999 114.7 558.3199999999999Z" fill="url(#tb4)" stroke="#2a8a8a" stroke-width="0.5" stroke-opacity="0.6"/><defs><radialGradient id="tb5" cx="0.8" cy="0.55" r="0.7"><stop offset="0" stop-color="#ff3c00"/><stop offset="0.21" stop-color="#ff7000"/><stop offset="0.35" stop-color="#f8c800"/><stop offset="0.50" stop-color="#e8e800"/><stop offset="0.62" stop-color="#30d020"/><stop offset="1" stop-color="#109a80"/></radialGradient></defs><path d="M115.0 572.3799999999999 Q116.0 567.3799999999999 121.5 567.1799999999998 Q127.5 567.8799999999999 128.3 573.8799999999999 Q128.0 579.8799999999999 122.0 581.3799999999999 Q116.0 580.3799999999999 114.7 575.8799999999999Z" fill="url(#tb5)" stroke="#2a8a8a" stroke-width="0.5" stroke-opacity="0.6"/><defs><radialGradient id="tb6" cx="0.5" cy="0.55" r="0.7"><stop offset="0" stop-color="#ff3c00"/><stop offset="0.30" stop-color="#ff7000"/><stop offset="0.50" stop-color="#f8c800"/><stop offset="0.75" stop-color="#e8e800"/><stop offset="0.87" stop-color="#30d020"/><stop offset="1" stop-color="#109a80"/></radialGradient></defs><path d="M115.0 589.9399999999999 Q116.0 584.9399999999999 121.5 584.7399999999999 Q127.5 585.4399999999999 128.3 591.4399999999999 Q128.0 597.4399999999999 122.0 598.9399999999999 Q116.0 597.9399999999999 114.7 593.4399999999999Z" fill="url(#tb6)" stroke="#2a8a8a" stroke-width="0.5" stroke-opacity="0.6"/><defs><radialGradient id="tb7" cx="0.55" cy="0.55" r="0.7"><stop offset="0" stop-color="#ff3c00"/><stop offset="0.36" stop-color="#ff7000"/><stop offset="0.60" stop-color="#f8c800"/><stop offset="0.88" stop-color="#e8e800"/><stop offset="0.97" stop-color="#30d020"/><stop offset="1" stop-color="#109a80"/></radialGradient></defs><path d="M115.0 607.4999999999999 Q116.0 602.4999999999999 121.5 602.2999999999998 Q127.5 602.9999999999999 128.3 608.9999999999999 Q128.0 614.9999999999999 122.0 616.4999999999999 Q116.0 615.4999999999999 114.7 610.9999999999999Z" fill="url(#tb7)" stroke="#2a8a8a" stroke-width="0.5" stroke-opacity="0.6"/><defs><radialGradient id="tb8" cx="0.85" cy="0.65" r="0.7"><stop offset="0" stop-color="#ff3c00"/><stop offset="0.18" stop-color="#ff7000"/><stop offset="0.30" stop-color="#f8c800"/><stop offset="0.45" stop-color="#e8e800"/><stop offset="0.57" stop-color="#30d020"/><stop offset="1" stop-color="#109a80"/></radialGradient></defs><path d="M115.0 625.06 Q116.0 620.06 121.5 619.8599999999999 Q127.5 620.56 128.3 626.56 Q128.0 632.56 122.0 634.06 Q116.0 633.06 114.7 628.56Z" fill="url(#tb8)" stroke="#2a8a8a" stroke-width="0.5" stroke-opacity="0.6"/><defs><radialGradient id="tb9" cx="0.85" cy="0.45" r="0.7"><stop offset="0" stop-color="#ff3c00"/><stop offset="0.18" stop-color="#ff7000"/><stop offset="0.30" stop-color="#f8c800"/><stop offset="0.45" stop-color="#e8e800"/><stop offset="0.57" stop-color="#30d020"/><stop offset="1" stop-color="#109a80"/></radialGradient></defs><path d="M115.0 642.6199999999999 Q116.0 637.6199999999999 121.5 637.4199999999998 Q127.5 638.1199999999999 128.3 644.1199999999999 Q128.0 650.1199999999999 122.0 651.6199999999999 Q116.0 650.6199999999999 114.7 646.1199999999999Z" fill="url(#tb9)" stroke="#2a8a8a" stroke-width="0.5" stroke-opacity="0.6"/></svg>
<div style="position:absolute;left:989.5px;top:340.5px;width:279px;height:5px;background:#eaeaea;"></div><div style="position:absolute;left:989.5px;top:345px;width:279px;height:1px;background:#9a9a9a;"></div><div style="position:absolute;left:990.5px;top:346px;width:277.5px;height:15.5px;background:linear-gradient(180deg,#fbfbfb,#eef0f2 35%,#d2d6dc 75%,#c8ccd2);"></div><div style="position:absolute;left:990.5px;top:361.5px;width:277.5px;height:1px;background:#6e737a;"></div><div style="position:absolute;left:990.5px;top:362.5px;width:277.5px;height:289px;background:#f0f0f0;"></div><div style="position:absolute;left:990.5px;top:346px;width:1px;height:305px;background:#8a8a8a;"></div><div style="position:absolute;left:1266.5px;top:346px;width:1.5px;height:305px;background:#b0b0b0;"></div><div style="position:absolute;left:999.3px;top:371.4px;width:10px;height:10.5px;border:1px solid #8f9bab;background:linear-gradient(135deg,#fdfdfd,#dfe3e9)"></div><svg style="position:absolute;left:999.3px;top:371.4px" width="10" height="10.5" viewBox="0 0 10 10.5"><path d="M2.4 3.2 L4 7.2 L7 2.6" fill="none" stroke="#4a6aa8" stroke-width="1.1"/></svg><div style="position:absolute;left:1012px;top:369.84px;height:13px;line-height:13px;font-family:'Liberation Sans', sans-serif;font-size:9.7px;color:#1a1a1a;white-space:nowrap;transform:scaleX(0.92);transform-origin:left;">Reference</div><div style="position:absolute;left:1010.5px;top:396.8px;width:9.5px;height:10px;border:1px solid #8f9bab;background:linear-gradient(135deg,#fdfdfd,#dfe3e9)"></div><svg style="position:absolute;left:1010.5px;top:396.8px" width="9.5" height="10" viewBox="0 0 10 10.5"><path d="M2.4 3.2 L4 7.2 L7 2.6" fill="none" stroke="#4a6aa8" stroke-width="1.1"/></svg><div style="position:absolute;left:1028px;top:391.4px;width:170px;height:19px;border:1px solid #9aa0a8;border-radius:2px;background:linear-gradient(180deg,#f8f9fb,#e8ebef 45%,#d4d9e0 55%,#e2e6ea)"></div><div style="position:absolute;left:1028px;top:395.04px;height:13px;line-height:13px;font-family:'Liberation Sans', sans-serif;font-size:9.7px;color:#1a1a1a;white-space:nowrap;transform:scaleX(0.92);transform-origin:center;width:170px;text-align:center;">Reference Processing...</div><div style="position:absolute;left:1000.7px;top:418.44px;height:13px;line-height:13px;font-family:'Liberation Sans', sans-serif;font-size:9.7px;color:#1a1a1a;white-space:nowrap;transform:scaleX(0.92);transform-origin:left;">Reference Type</div><div style="position:absolute;left:1067.5px;top:416.2px;width:130.3px;height:16.2px;border:1px solid #a4a9b0;background:#fff"></div><div style="position:absolute;left:1070.0px;top:417.80px;height:13px;line-height:13px;font-family:'Liberation Sans', sans-serif;font-size:9.7px;color:#1a1a1a;white-space:nowrap;transform:scaleX(0.92);transform-origin:left;">One Reference For All</div><svg style="position:absolute;left:1188.8px;top:422.8px" width="6" height="4" viewBox="0 0 6 4"><path d="M1 0.8 L3 2.8 L5 0.8" fill="none" stroke="#222" stroke-width="1.1"/></svg><div style="position:absolute;left:999.5px;top:446.8px;width:198px;height:94px;border:1px solid #e4e4e4;border-radius:2px"></div><div style="position:absolute;left:1004px;top:441px;width:92px;height:12px;background:#f0f0f0;"></div><div style="position:absolute;left:1006.5px;top:441.00px;height:13px;line-height:13px;font-family:'Liberation Sans', sans-serif;font-size:9.7px;color:#1a1a1a;white-space:nowrap;transform:scaleX(0.92);transform-origin:left;">One Reference For All</div><div style="position:absolute;left:1008.7px;top:459.40px;height:13px;line-height:13px;font-family:'Liberation Sans', sans-serif;font-size:9.7px;color:#1a1a1a;white-space:nowrap;transform:scaleX(0.92);transform-origin:left;">Reference Remove</div><div style="position:absolute;left:1090.2px;top:457.5px;width:96.2px;height:16px;border:1px solid #a4a9b0;background:#fff"></div><div style="position:absolute;left:1092.7px;top:459.00px;height:13px;line-height:13px;font-family:'Liberation Sans', sans-serif;font-size:9.7px;color:#1a1a1a;white-space:nowrap;transform:scaleX(0.92);transform-origin:left;">Plane</div><svg style="position:absolute;left:1177.4px;top:464.0px" width="6" height="4" viewBox="0 0 6 4"><path d="M1 0.8 L3 2.8 L5 0.8" fill="none" stroke="#222" stroke-width="1.1"/></svg><div style="position:absolute;left:1047.2px;top:482.20px;height:13px;line-height:13px;font-family:'Liberation Sans', sans-serif;font-size:9.7px;color:#1a1a1a;white-space:nowrap;transform:scaleX(0.92);transform-origin:left;">Define By</div><div style="position:absolute;left:1090.2px;top:480.4px;width:96.2px;height:16.1px;border:1px solid #a4a9b0;background:#fff"></div><div style="position:absolute;left:1092.7px;top:481.95px;height:13px;line-height:13px;font-family:'Liberation Sans', sans-serif;font-size:9.7px;color:#1a1a1a;white-space:nowrap;transform:scaleX(0.92);transform-origin:left;">Size</div><svg style="position:absolute;left:1177.4px;top:486.95px" width="6" height="4" viewBox="0 0 6 4"><path d="M1 0.8 L3 2.8 L5 0.8" fill="none" stroke="#222" stroke-width="1.1"/></svg><div style="position:absolute;left:1055.5px;top:503.50px;height:13px;line-height:13px;font-family:'Liberation Sans', sans-serif;font-size:9.7px;color:#1a1a1a;white-space:nowrap;transform:scaleX(0.92);transform-origin:left;">Largest</div><div style="position:absolute;left:1090.2px;top:502.3px;width:96.2px;height:15.4px;border:1px solid #a4a9b0;background:#fff"></div><div style="position:absolute;left:1092.7px;top:503.50px;height:13px;line-height:13px;font-family:'Liberation Sans', sans-serif;font-size:9.7px;color:#1a1a1a;white-space:nowrap;transform:scaleX(0.92);transform-origin:left;">1</div><svg style="position:absolute;left:1177.4px;top:508.5px" width="6" height="4" viewBox="0 0 6 4"><path d="M1 0.8 L3 2.8 L5 0.8" fill="none" stroke="#222" stroke-width="1.1"/></svg><div style="position:absolute;left:1007.3px;top:522.5px;width:10px;height:10.5px;border:1px solid #8f9bab;background:linear-gradient(135deg,#fdfdfd,#dfe3e9)"></div><svg style="position:absolute;left:1007.3px;top:522.5px" width="10" height="10.5" viewBox="0 0 10 10.5"><path d="M2.4 3.2 L4 7.2 L7 2.6" fill="none" stroke="#4a6aa8" stroke-width="1.1"/></svg><div style="position:absolute;left:1020.5px;top:521.20px;height:13px;line-height:13px;font-family:'Liberation Sans', sans-serif;font-size:9.7px;color:#1a1a1a;white-space:nowrap;transform:scaleX(0.92);transform-origin:left;">Exclude Reference</div><div style="position:absolute;left:999.5px;top:551.5px;width:198px;height:18px;border:1px solid #d4d6d9;border-radius:2px;background:linear-gradient(180deg,#f4f5f6,#e8e9eb 45%,#dcdee1 55%,#e6e7e9)"></div><div style="position:absolute;left:999.5px;top:554.94px;height:13px;line-height:13px;font-family:'Liberation Sans', sans-serif;font-size:9.7px;color:#a6a6a6;white-space:nowrap;transform:scaleX(0.92);transform-origin:center;width:198px;text-align:center;">Configure Reference...</div><div style="position:absolute;left:1001.7px;top:577px;width:10px;height:10.5px;border:1px solid #8f9bab;background:linear-gradient(135deg,#fdfdfd,#dfe3e9)"></div><div style="position:absolute;left:1014.8px;top:575.50px;height:13px;line-height:13px;font-family:'Liberation Sans', sans-serif;font-size:9.7px;color:#1a1a1a;white-space:nowrap;transform:scaleX(0.92);transform-origin:left;">Highlight Reference on Input Viewer</div>
</div></body></html>
